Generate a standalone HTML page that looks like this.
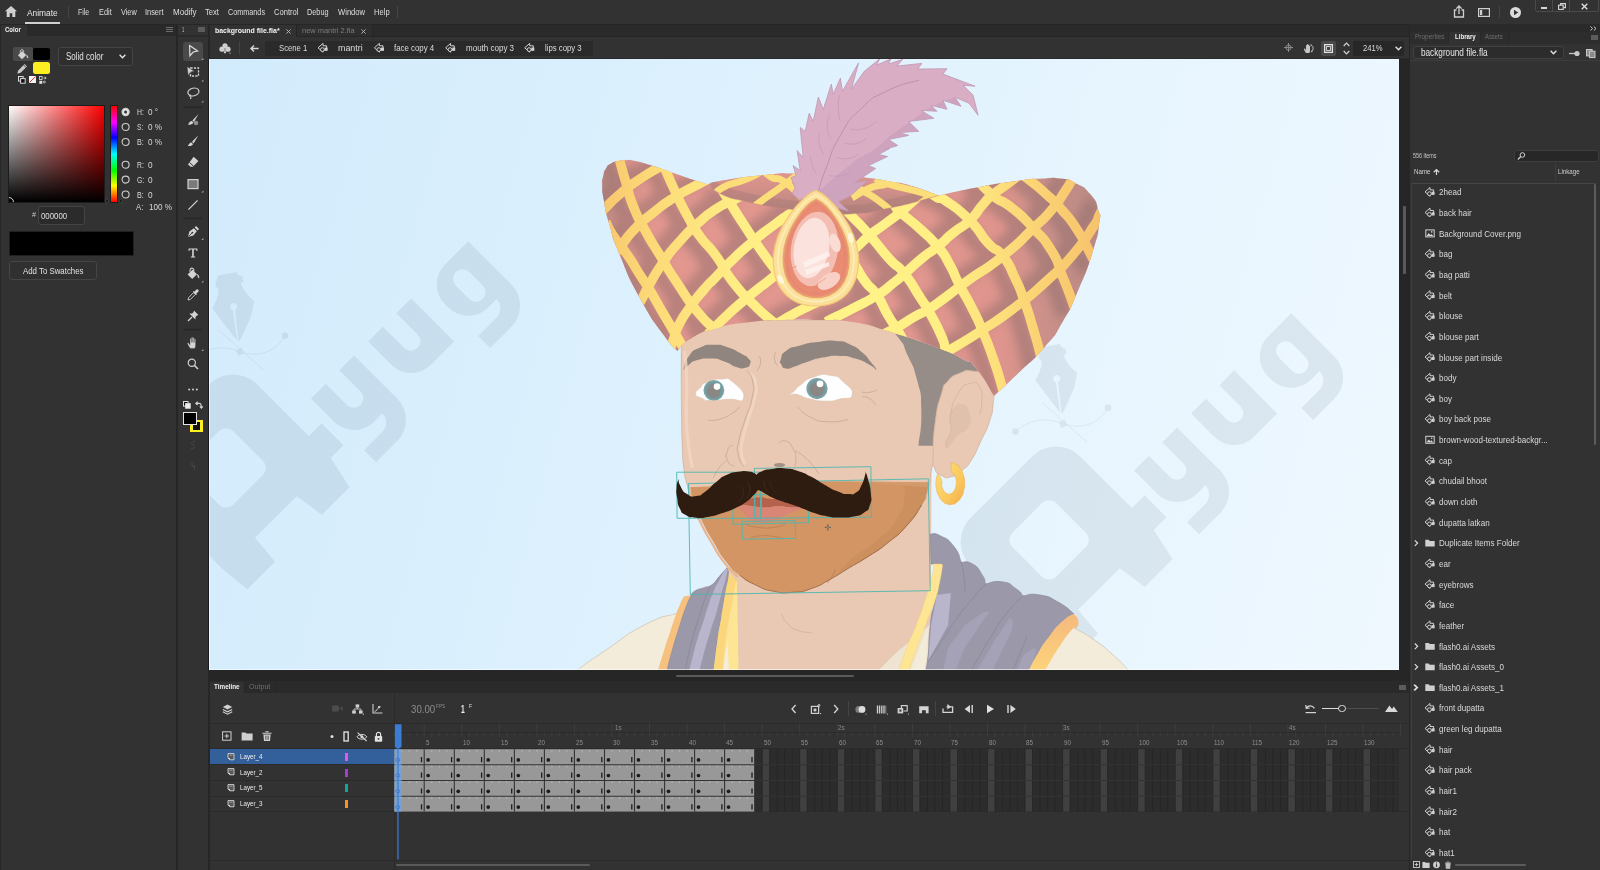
<!DOCTYPE html>
<html><head><meta charset="utf-8">
<style>
*{box-sizing:border-box;margin:0;padding:0}
html,body{width:1600px;height:870px;overflow:hidden;background:#262626;font-family:"Liberation Sans",sans-serif;color:#d6d6d6;font-size:9px}
.a{position:absolute}
.t{position:absolute;white-space:pre;line-height:12px;height:12px;transform-origin:0 50%}
.p{background:#323232}
svg{position:absolute;overflow:visible}
</style></head><body>
<!-- MENU BAR -->
<div class="a p" style="left:0;top:0;width:1600px;height:24px"></div>
<!-- LEFT COLOR PANEL -->
<div class="a p" style="left:0;top:24px;width:176px;height:846px"></div>
<!-- TOOLS -->
<div class="a p" style="left:178px;top:24px;width:30px;height:846px"></div>
<!-- DOC AREA -->
<div class="a p" style="left:209px;top:24px;width:1200px;height:657px"></div>
<!-- TIMELINE -->
<div class="a p" style="left:209px;top:681px;width:1200px;height:189px"></div>
<!-- RIGHT PANEL -->
<div class="a p" style="left:1410px;top:24px;width:190px;height:846px"></div>

<!-- menu -->
<svg style="left:5px;top:6px" width="12" height="11" viewBox="0 0 12 11"><path d="M6 0 L12 5.2 H10.3 V11 H7.3 V7.2 H4.7 V11 H1.7 V5.2 H0 Z" fill="#d0d0d0"/></svg>
<span class="t" style="left:26.8px;top:6.6px;font-size:9.5px;font-weight:400;color:#e6e6e6;transform:scaleX(0.881)">Animate</span>
<div class="a" style="left:25px;top:22px;width:35px;height:1.5px;background:#cfcfcf"></div>
<div class="a" style="left:68px;top:6px;width:1px;height:12px;background:#444"></div>
<span class="t" style="left:78.4px;top:5.9px;font-size:9.5px;font-weight:400;color:#dedede;transform:scaleX(0.725)">File</span>
<span class="t" style="left:98.8px;top:5.9px;font-size:9.5px;font-weight:400;color:#dedede;transform:scaleX(0.776)">Edit</span>
<span class="t" style="left:120.6px;top:5.9px;font-size:9.5px;font-weight:400;color:#dedede;transform:scaleX(0.769)">View</span>
<span class="t" style="left:144.9px;top:5.9px;font-size:9.5px;font-weight:400;color:#dedede;transform:scaleX(0.778)">Insert</span>
<span class="t" style="left:172.7px;top:5.9px;font-size:9.5px;font-weight:400;color:#dedede;transform:scaleX(0.843)">Modify</span>
<span class="t" style="left:205.0px;top:5.9px;font-size:9.5px;font-weight:400;color:#dedede;transform:scaleX(0.803)">Text</span>
<span class="t" style="left:228.0px;top:5.9px;font-size:9.5px;font-weight:400;color:#dedede;transform:scaleX(0.762)">Commands</span>
<span class="t" style="left:273.8px;top:5.9px;font-size:9.5px;font-weight:400;color:#dedede;transform:scaleX(0.800)">Control</span>
<span class="t" style="left:307.2px;top:5.9px;font-size:9.5px;font-weight:400;color:#dedede;transform:scaleX(0.771)">Debug</span>
<span class="t" style="left:337.8px;top:5.9px;font-size:9.5px;font-weight:400;color:#dedede;transform:scaleX(0.802)">Window</span>
<span class="t" style="left:374.0px;top:5.9px;font-size:9.5px;font-weight:400;color:#dedede;transform:scaleX(0.798)">Help</span>
<div class="a" style="left:397px;top:6px;width:1px;height:12px;background:#444"></div>
<!-- right icons -->
<svg style="left:1453px;top:5px" width="12" height="13" viewBox="0 0 12 13"><path d="M3.5 5 H1.5 V12 H10.5 V5 H8.5" fill="none" stroke="#d0d0d0" stroke-width="1.3"/><path d="M6 9 V1.2 M3.3 3.6 L6 1 L8.7 3.6" fill="none" stroke="#d0d0d0" stroke-width="1.3"/></svg>
<svg style="left:1478px;top:8px" width="12" height="9" viewBox="0 0 12 9"><rect x=".6" y=".6" width="10.8" height="7.8" fill="none" stroke="#d0d0d0" stroke-width="1.2"/><rect x="2" y="2" width="2.2" height="5" fill="#d0d0d0"/></svg>
<div class="a" style="left:1499px;top:6px;width:1px;height:12px;background:#444"></div>
<svg style="left:1509.5px;top:6.5px" width="11" height="11" viewBox="0 0 11 11"><circle cx="5.5" cy="5.5" r="5.5" fill="#dcdcdc"/><path d="M4 2.8 L8.2 5.5 L4 8.2 Z" fill="#323232"/></svg>
<div class="a" style="left:1535px;top:-1px;width:64px;height:12.5px;border:1px solid #4a4a4a;border-radius:0 0 2px 2px"></div>
<div class="a" style="left:1552px;top:0;width:1px;height:11px;background:#4a4a4a"></div>
<div class="a" style="left:1569px;top:0;width:1px;height:11px;background:#4a4a4a"></div>
<div class="a" style="left:1540.5px;top:7px;width:6.5px;height:1.6px;background:#d8d8d8"></div>
<svg style="left:1557.5px;top:2.5px" width="8" height="7" viewBox="0 0 8 7"><rect x=".6" y="2.2" width="4.6" height="4.2" fill="none" stroke="#d8d8d8" stroke-width="1.1"/><path d="M2.6 2 V.6 H7.4 V4.6 H5.4" fill="none" stroke="#d8d8d8" stroke-width="1.1"/></svg>
<svg style="left:1581px;top:2.5px" width="7" height="7" viewBox="0 0 7 7"><path d="M.7 .7 L6.3 6.3 M6.3 .7 L.7 6.3" stroke="#e0e0e0" stroke-width="1.3"/></svg>

<!-- color panel -->
<div class="a" style="left:0;top:24px;width:176px;height:12px;background:#2a2a2a"></div>
<div class="a" style="left:0;top:24px;width:1600px;height:1px;background:#262626"></div>
<div class="a p" style="left:1px;top:25px;width:26px;height:11px"></div>
<div class="a" style="left:0;top:24px;width:1px;height:846px;background:#282828"></div>
<span class="t" style="left:4.8px;top:24.2px;font-size:8px;font-weight:700;color:#f2f2f2;transform:scaleX(0.756)">Color</span>
<svg style="left:166px;top:27px" width="7" height="5" viewBox="0 0 7 5"><path d="M0 .5H7M0 2.5H7M0 4.5H7" stroke="#6e6e6e" stroke-width="1"/></svg>
<!-- fill/stroke -->
<div class="a" style="left:12.5px;top:47px;width:20px;height:13.5px;background:#4a4a4a;border-radius:2px"></div>
<svg style="left:16.5px;top:48.5px" width="12" height="11" viewBox="0 0 12 11"><path d="M1 6.2 L5.2 2 L9.2 6 L5 10.2 Z" fill="#d4d4d4"/><path d="M3.2 3.8 C3 1.5 4.2 .4 5.4 .7 C6.4 1 6.8 2.2 6.6 3.4" fill="none" stroke="#d4d4d4" stroke-width="1"/><path d="M9.4 5.6 C10.8 6.6 11.4 8 11.2 9.6 C10 9 9.4 8 9.4 5.6Z" fill="#d4d4d4"/></svg>
<div class="a" style="left:33px;top:47.5px;width:17px;height:12px;background:#000;border-radius:2px"></div>
<svg style="left:17px;top:62.5px" width="11" height="11" viewBox="0 0 11 11"><path d="M.3 10.7 L1.2 7.4 L7.6 1 L10 3.4 L3.6 9.8 Z" fill="#c8c8c8"/><path d="M6.6 2 L9 4.4" stroke="#323232" stroke-width=".8"/></svg>
<div class="a" style="left:33px;top:61.5px;width:17px;height:12.5px;background:#fcee21;border-radius:2.5px"></div>
<svg style="left:18.3px;top:75.8px" width="8" height="8" viewBox="0 0 8 8"><rect x=".5" y=".5" width="4.6" height="4.6" fill="#323232" stroke="#dcdcdc" stroke-width="1"/><rect x="2.6" y="2.6" width="4.6" height="4.6" fill="#111" stroke="#dcdcdc" stroke-width="1"/></svg>
<svg style="left:29.3px;top:76.2px" width="7" height="7" viewBox="0 0 7 7"><rect width="7" height="7" fill="#f4f4f4"/><path d="M.6 6.4 L6.4 .6" stroke="#e83030" stroke-width="1"/></svg>
<svg style="left:39px;top:76px" width="8" height="8" viewBox="0 0 8 8"><rect x=".5" y=".5" width="2.6" height="3" fill="none" stroke="#d0d0d0" stroke-width=".9"/><rect x=".3" y="4.8" width="3" height="3" fill="#e0e0e0"/><path d="M4.4 2 H7 M5.8 .8 L7.2 2 L5.8 3.2 M7 6 H4.4 M5.6 4.8 L4.2 6 L5.6 7.2" fill="none" stroke="#d0d0d0" stroke-width=".9"/></svg>
<!-- dropdown -->
<div class="a" style="left:57.5px;top:46.5px;width:75px;height:19.5px;background:#2e2e2e;border:1px solid #444;border-radius:3px"></div>
<span class="t" style="left:65.6px;top:50.6px;font-size:10px;font-weight:400;color:#e2e2e2;transform:scaleX(0.801)">Solid color</span>
<svg style="left:118.5px;top:54px" width="7" height="5" viewBox="0 0 7 5"><path d="M.6 .8 L3.5 3.8 L6.4 .8" fill="none" stroke="#e4e4e4" stroke-width="1.3"/></svg>
<!-- picker -->
<div class="a" style="left:8px;top:104.5px;width:97px;height:98px;background:#1c1c1c"></div>
<div class="a" style="left:9px;top:105.5px;width:95px;height:96px;background:linear-gradient(to bottom,rgba(0,0,0,0),#000),linear-gradient(to right,#fff,#f00)"></div>
<svg style="left:9px;top:196.5px" width="5" height="5" viewBox="0 0 5 5"><path d="M0 .6 C2.6 .6 4.4 2.4 4.4 5" fill="none" stroke="#d8d8d8" stroke-width="1"/></svg>
<div class="a" style="left:109.5px;top:104.5px;width:8px;height:98px;background:#1c1c1c"></div>
<div class="a" style="left:110.5px;top:105.5px;width:6px;height:96px;background:linear-gradient(to bottom,#f00 0%,#f0f 17%,#00f 33%,#0ff 50%,#0f0 67%,#ff0 83%,#f00 100%)"></div>
<svg style="left:106px;top:197.5px" width="16" height="6" viewBox="0 0 16 6"><path d="M0 0 L3 3 L0 6 Z M16 0 L13 3 L16 6 Z" fill="#1a1a1a" stroke="#555" stroke-width=".5"/></svg>
<!-- radios -->
<svg style="left:121px;top:107px" width="10" height="95" viewBox="0 0 10 95">
<g fill="none" stroke="#cfcfcf" stroke-width="1.1"><circle cx="4.6" cy="5" r="3.6" fill="#e6e6e6"/><circle cx="4.6" cy="20" r="3.5"/><circle cx="4.6" cy="35" r="3.5"/><circle cx="4.6" cy="57.7" r="3.5"/><circle cx="4.6" cy="72.6" r="3.5"/><circle cx="4.6" cy="87.5" r="3.5"/></g><circle cx="4.6" cy="5" r="1.5" fill="#323232"/></svg>
<span class="t" style="left:136.7px;top:106.2px;font-size:9px;font-weight:400;color:#d8d8d8;transform:scaleX(0.756)">H:</span><span class="t" style="left:148.0px;top:106.2px;font-size:9px;font-weight:400;color:#d8d8d8;transform:scaleX(0.900)">0 °</span>
<span class="t" style="left:136.7px;top:121.3px;font-size:9px;font-weight:400;color:#d8d8d8;transform:scaleX(0.740)">S:</span><span class="t" style="left:148.0px;top:121.3px;font-size:9px;font-weight:400;color:#d8d8d8;transform:scaleX(0.902)">0 %</span>
<span class="t" style="left:136.7px;top:136.3px;font-size:9px;font-weight:400;color:#d8d8d8;transform:scaleX(0.799)">B:</span><span class="t" style="left:148.0px;top:136.3px;font-size:9px;font-weight:400;color:#d8d8d8;transform:scaleX(0.902)">0 %</span>
<span class="t" style="left:136.7px;top:158.8px;font-size:9px;font-weight:400;color:#d8d8d8;transform:scaleX(0.756)">R:</span><span class="t" style="left:148.0px;top:158.8px;font-size:9px;font-weight:400;color:#d8d8d8;transform:scaleX(0.917)">0</span>
<span class="t" style="left:136.7px;top:173.8px;font-size:9px;font-weight:400;color:#d8d8d8;transform:scaleX(0.767)">G:</span><span class="t" style="left:148.0px;top:173.8px;font-size:9px;font-weight:400;color:#d8d8d8;transform:scaleX(0.917)">0</span>
<span class="t" style="left:136.7px;top:188.7px;font-size:9px;font-weight:400;color:#d8d8d8;transform:scaleX(0.799)">B:</span><span class="t" style="left:148.0px;top:188.7px;font-size:9px;font-weight:400;color:#d8d8d8;transform:scaleX(0.917)">0</span>
<span class="t" style="left:136.2px;top:200.8px;font-size:9px;font-weight:400;color:#d8d8d8;transform:scaleX(0.857)">A:</span><span class="t" style="left:148.5px;top:200.8px;font-size:9px;font-weight:400;color:#d8d8d8;transform:scaleX(0.901)">100 %</span>
<!-- hex -->
<span class="t" style="left:31.5px;top:209.3px;font-size:7.5px;font-weight:400;color:#c8c8c8;transform:scaleX(0.959)">#</span>
<div class="a" style="left:37.5px;top:205.5px;width:47px;height:19.5px;background:#2b2b2b;border:1px solid #444;border-radius:3px"></div>
<span class="t" style="left:40.6px;top:209.5px;font-size:9px;font-weight:400;color:#e0e0e0;transform:scaleX(0.872)">000000</span>
<div class="a" style="left:8.5px;top:230.5px;width:125px;height:25.5px;background:#000;border:1px solid #202020"></div>
<div class="a" style="left:9px;top:260.5px;width:88px;height:19.5px;border:1px solid #454545;border-radius:3px;background:#303030"></div>
<span class="t" style="left:22.5px;top:264.5px;font-size:9px;font-weight:400;color:#e0e0e0;transform:scaleX(0.872)">Add To Swatches</span>

<!-- tools -->
<div class="a" style="left:176px;top:24px;width:2px;height:846px;background:#262626"></div>
<div class="a" style="left:178px;top:35px;width:30px;height:1.5px;background:#2a2a2a"></div>
<span class="t" style="left:182.0px;top:24.0px;font-size:8px;font-weight:400;color:#9fc4ee;transform:scaleX(0.516)">1</span>
<svg style="left:198px;top:27px" width="7" height="5" viewBox="0 0 7 5"><rect width="7" height="5" fill="#5c5c5c"/></svg>
<div class="a" style="left:182.5px;top:41.5px;width:20.5px;height:19.5px;background:#4a4a4a;border-radius:3px"></div>
<svg style="left:184.5px;top:43px" width="16" height="16" viewBox="0 0 16 16"><path d="M4.6 2.6 L12.6 8 L8.2 9 L4.9 12.8 Z" fill="none" stroke="#e0e0e0" stroke-width="1.2" stroke-linejoin="miter"/></svg>
<g></g>
<svg style="left:184.5px;top:64px" width="16" height="16" viewBox="0 0 16 16"><rect x="5.5" y="4" width="8" height="8" fill="none" stroke="#d0d0d0" stroke-width="1.3" stroke-dasharray="2.2 1.2"/><path d="M2 2.6 L9.4 7.2 L5.6 8 L3.2 11.4 Z" fill="#d0d0d0" stroke="#323232" stroke-width=".5"/></svg>
<svg style="left:184.5px;top:85px" width="16" height="16" viewBox="0 0 16 16"><ellipse cx="8.4" cy="7" rx="5.6" ry="3.8" fill="none" stroke="#cfcfcf" stroke-width="1.2" transform="rotate(-12 8.4 7)"/><path d="M5.8 10.2 C4.6 9.6 4.2 11 5.2 11.4 C6.4 11.8 6.2 13.4 5 13.8" fill="none" stroke="#cfcfcf" stroke-width="1.1"/></svg>
<svg style="left:178px;top:40px" width="30" height="440" viewBox="0 0 30 440"><g fill="#b0b0b0"><path d="M25.4 18.0 V20 H23.4Z"/><path d="M25.4 39.5 V41.5 H23.4Z"/><path d="M25.4 60.5 V62.5 H23.4Z"/><path d="M25.4 150.5 V152.5 H23.4Z"/><path d="M25.4 198.0 V200 H23.4Z"/><path d="M25.4 240.5 V242.5 H23.4Z"/><path d="M25.4 309.0 V311 H23.4Z"/></g>
<g stroke="#262626" stroke-width="1.3"><path d="M5.5 67.2H24"/><path d="M5.5 178.4H24"/><path d="M5.5 289.5H24"/></g></svg>
<!-- fluid brush -->
<svg style="left:184.5px;top:112px" width="16" height="16" viewBox="0 0 16 16"><path d="M13.6 2 L7.4 8.4 L9 10 Z" fill="#d4d4d4"/><path d="M6.8 9 C5 9 4.6 10.6 3 12.4 C5.4 13 7.6 12.4 8.4 10.6 Z" fill="#d4d4d4"/><circle cx="11" cy="11" r="2.3" fill="#8e8e8e"/></svg>
<!-- brush -->
<svg style="left:184.5px;top:133px" width="16" height="16" viewBox="0 0 16 16"><path d="M13.4 2.2 L7 8.8 L8.6 10.4 Z" fill="#d4d4d4"/><path d="M6.4 9.4 C4.6 9.4 4.4 11 2.8 12.8 C5.2 13.4 7.2 12.8 8 11 Z" fill="#d4d4d4"/></svg>
<!-- eraser -->
<svg style="left:184.5px;top:154px" width="16" height="16" viewBox="0 0 16 16"><path d="M8.6 2.8 L13.4 7 L8 12.8 H5.6 L3 10.4 Z" fill="#d4d4d4"/><path d="M4.6 8.6 L8.8 12.4" stroke="#323232" stroke-width="1"/></svg>
<!-- rect -->
<svg style="left:184.5px;top:176px" width="16" height="16" viewBox="0 0 16 16"><rect x="3" y="3.6" width="10" height="9" fill="#7a7a7a" stroke="#d0d0d0" stroke-width="1.2"/></svg>
<!-- line -->
<svg style="left:184.5px;top:197px" width="16" height="16" viewBox="0 0 16 16"><path d="M3.4 12.6 L12.6 3.4" stroke="#d4d4d4" stroke-width="1.2"/></svg>
<!-- pen -->
<svg style="left:184.5px;top:223.5px" width="16" height="16" viewBox="0 0 16 16"><path d="M3 13 L4.4 7.6 L8.8 4.2 L11.8 7.2 L8.4 11.6 Z" fill="#d4d4d4"/><path d="M9.6 3.4 L11 2 L14 5 L12.6 6.4 Z" fill="#d4d4d4"/><path d="M3.4 12.6 L7 9" stroke="#323232" stroke-width=".9"/><circle cx="7.4" cy="8.6" r=".9" fill="#323232"/></svg>
<!-- T -->
<svg style="left:184.5px;top:245px" width="16" height="16" viewBox="0 0 16 16"><path d="M3.6 3.4 H12.4 V6 H11.4 V4.6 H8.8 V11.6 H10.2 V12.6 H5.8 V11.6 H7.2 V4.6 H4.6 V6 H3.6 Z" fill="#d8d8d8"/></svg>
<!-- bucket -->
<svg style="left:184.5px;top:266px" width="16" height="16" viewBox="0 0 16 16"><path d="M2.6 8.4 L7.4 3.8 L12 8.2 L7.2 13 Z" fill="#d4d4d4"/><path d="M5 5.8 C4.6 3 6 1.8 7.4 2.2 C8.6 2.6 9 4 8.8 5.4" fill="none" stroke="#d4d4d4" stroke-width="1.1"/><path d="M12.2 7.8 C13.8 9 14.4 10.6 14.2 12.4 C12.8 11.8 12.2 10.6 12.2 7.8Z" fill="#d4d4d4"/></svg>
<!-- eyedropper -->
<svg style="left:184.5px;top:287px" width="16" height="16" viewBox="0 0 16 16"><path d="M3 13 L3.6 10.6 L8.6 5.6 L10.4 7.4 L5.4 12.4 Z" fill="none" stroke="#c8c8c8" stroke-width="1"/><path d="M8.4 4.4 L11.6 7.6 M9.6 5.6 L11.6 3.2 C12.4 2.4 13.6 3.6 12.8 4.4 L10.6 6.6" fill="#d4d4d4" stroke="#d4d4d4" stroke-width="1.3"/></svg>
<!-- pin -->
<svg style="left:184.5px;top:308px" width="16" height="16" viewBox="0 0 16 16"><path d="M9 2.6 L13.4 7 L12 7.4 L10.6 8.8 L10.4 11.6 L4.4 5.6 L7.2 5.4 L8.6 4 Z" fill="#d4d4d4"/><path d="M7 9 L3 13" stroke="#d4d4d4" stroke-width="1.2"/></svg>
<!-- hand -->
<svg style="left:184.5px;top:334.5px" width="16" height="16" viewBox="0 0 16 16"><path d="M5.2 13.4 C4 11.6 2.8 9.8 2.4 8.6 C2.2 7.8 3.2 7.4 3.8 8.2 L5 9.8 V4 C5 3 6.4 3 6.4 4 V7.4 V2.8 C6.4 1.8 7.8 1.8 7.8 2.8 V7.4 V3.2 C7.8 2.2 9.2 2.2 9.2 3.2 V7.6 V4.6 C9.2 3.6 10.6 3.6 10.6 4.6 V10 C10.6 11.6 10.2 12.4 9.8 13.4 Z" fill="#d4d4d4" stroke="#323232" stroke-width=".35"/></svg>
<!-- zoom -->
<svg style="left:184.5px;top:356px" width="16" height="16" viewBox="0 0 16 16"><circle cx="6.8" cy="6.8" r="3.6" fill="none" stroke="#d0d0d0" stroke-width="1.2"/><path d="M9.4 9.4 L13 13" stroke="#d0d0d0" stroke-width="1.5"/></svg>
<!-- dots -->
<svg style="left:187.5px;top:387.5px" width="10" height="3" viewBox="0 0 10 3"><circle cx="1.2" cy="1.5" r="1" fill="#d0d0d0"/><circle cx="5" cy="1.5" r="1" fill="#d0d0d0"/><circle cx="8.8" cy="1.5" r="1" fill="#d0d0d0"/></svg>
<svg style="left:182.5px;top:400.5px" width="8" height="8" viewBox="0 0 8 8"><rect x=".5" y=".5" width="4.6" height="4.6" fill="#111" stroke="#dcdcdc" stroke-width="1"/><rect x="2.6" y="2.6" width="4.6" height="4.6" fill="#eee" stroke="#dcdcdc" stroke-width="1"/></svg>
<svg style="left:194.5px;top:400.5px" width="8" height="8" viewBox="0 0 8 8"><path d="M1 2.4 H4.2 C6 2.4 6.4 4 6.4 7 M2.6 .6 L.8 2.4 L2.6 4.2 M4.8 5.4 L6.4 7.2 L7.8 5.4" fill="none" stroke="#d4d4d4" stroke-width="1.1"/></svg>
<div class="a" style="left:190px;top:419.5px;width:12.5px;height:12.5px;background:#fcee21"></div>
<div class="a" style="left:192.5px;top:422px;width:7.5px;height:7.5px;background:#111"></div>
<div class="a" style="left:183px;top:411.5px;width:13.5px;height:13.5px;background:#000;border:1px solid #e4e4e4"></div>
<svg style="left:188.5px;top:440px" width="8" height="10" viewBox="0 0 8 10"><path d="M6 1 C2 1.4 1.8 3.6 4 4.8 C6.4 6 5.6 8.4 2 9" fill="none" stroke="#484848" stroke-width="1"/></svg>
<svg style="left:188.5px;top:460.5px" width="8" height="10" viewBox="0 0 8 10"><path d="M3 1 V5 H5.6 V9" fill="none" stroke="#484848" stroke-width="1"/></svg>

<!-- doc tabs -->
<div class="a" style="left:208px;top:24px;width:1.5px;height:846px;background:#262626"></div>
<div class="a" style="left:209px;top:25px;width:1201px;height:12px;background:#2a2a2a"></div>
<div class="a p" style="left:209.5px;top:25px;width:86.5px;height:12px"></div>
<div class="a" style="left:296px;top:25px;width:1px;height:11px;background:#262626"></div>
<div class="a" style="left:297px;top:25px;width:75px;height:11px;background:#2e2e2e"></div>
<div class="a" style="left:372px;top:25px;width:1px;height:11px;background:#262626"></div>
<div class="a" style="left:297px;top:36px;width:1113px;height:1px;background:#262626"></div>
<span class="t" style="left:215.0px;top:24.6px;font-size:8px;font-weight:700;color:#f4f4f4;transform:scaleX(0.870)">background file.fla*</span>
<span class="t" style="left:302.4px;top:24.6px;font-size:8px;font-weight:400;color:#7c7c7c;transform:scaleX(0.931)">new mantri 2.fla</span>
<svg style="left:285.5px;top:29px" width="5" height="5" viewBox="0 0 5 5"><path d="M.4 .4L4.6 4.6M4.6 .4L.4 4.6" stroke="#bdbdbd" stroke-width=".9"/></svg>
<svg style="left:361px;top:29px" width="5" height="5" viewBox="0 0 5 5"><path d="M.4 .4L4.6 4.6M4.6 .4L.4 4.6" stroke="#bdbdbd" stroke-width=".9"/></svg>
<!-- edit bar -->
<svg style="left:219px;top:42.5px" width="12" height="11" viewBox="0 0 12 11"><circle cx="6" cy="2.8" r="2.6" fill="#cfcfcf"/><circle cx="3" cy="6.2" r="2.6" fill="#cfcfcf"/><circle cx="9" cy="6.2" r="2.6" fill="#cfcfcf"/><path d="M6 5 L7.2 10.2 H4.8 Z" fill="#cfcfcf"/><circle cx="11" cy="10.2" r=".6" fill="#cfcfcf"/></svg>
<div class="a" style="left:239px;top:41px;width:1px;height:14px;background:#444"></div>
<svg style="left:250px;top:44.5px" width="9" height="7" viewBox="0 0 9 7"><path d="M8.6 3.5 H1.6 M4 .6 L1 3.5 L4 6.4" fill="none" stroke="#d8d8d8" stroke-width="1.4"/></svg>
<div class="a" style="left:264.5px;top:40.5px;width:328.5px;height:15px;background:#2a2a2a;border-radius:2px"></div>
<span class="t" style="left:278.7px;top:42.0px;font-size:9.5px;font-weight:400;color:#dcdcdc;transform:scaleX(0.811)">Scene 1</span>
<span class="t" style="left:338.4px;top:42.0px;font-size:9.5px;font-weight:400;color:#dcdcdc;transform:scaleX(0.932)">mantri</span>
<span class="t" style="left:394.2px;top:42.0px;font-size:9.5px;font-weight:400;color:#dcdcdc;transform:scaleX(0.827)">face copy 4</span>
<span class="t" style="left:465.5px;top:42.0px;font-size:9.5px;font-weight:400;color:#dcdcdc;transform:scaleX(0.843)">mouth copy 3</span>
<span class="t" style="left:544.6px;top:42.0px;font-size:9.5px;font-weight:400;color:#dcdcdc;transform:scaleX(0.815)">lips copy 3</span>
<svg style="left:0;top:0" width="1600" height="870" viewBox="0 0 1600 870"><defs><g id="sym"><path d="M0 4.6 L5 .2 V2.6 H8.6 V6.6 H5 V9 Z" fill="none" stroke="#d2d2d2" stroke-width="1"/><circle cx="4.4" cy="6.4" r="1.9" fill="#323232" stroke="#d2d2d2" stroke-width="1"/><rect x="6.6" y="4.4" width="3" height="3.2" fill="#d2d2d2"/></g></defs>
<use href="#sym" x="318" y="43.2"/><use href="#sym" x="374.4" y="43.2"/><use href="#sym" x="445.6" y="43.2"/><use href="#sym" x="524.7" y="43.2"/></svg>
<!-- right side of edit bar -->
<svg style="left:1283.5px;top:43px" width="9" height="9" viewBox="0 0 9 9"><circle cx="4.5" cy="4.5" r="2.6" fill="none" stroke="#8a8a8a" stroke-width="1"/><path d="M4.5 0V9M0 4.5H9" stroke="#8a8a8a" stroke-width="1"/></svg>
<svg style="left:1302px;top:42px" width="13" height="12" viewBox="0 0 13 12"><path d="M4 11 C3 9.4 2.2 8.2 2 7.2 C1.8 6.6 2.6 6.2 3.2 7 L4 8.2 V3.6 C4 2.8 5 2.8 5 3.6 V6.4 V2.6 C5 1.8 6 1.8 6 2.6 V6.4 V3 C6 2.2 7 2.2 7 3 V6.6 V4.2 C7 3.4 8 3.4 8 4.2 V8.4 C8 9.6 7.8 10.2 7.4 11 Z" fill="#c6c6c6"/><path d="M9.4 3.2 C11.6 4.6 11.8 7.8 9.6 9.6 M8.8 2.4 L9.6 3.4 L8.4 4 M10.4 9.8 L9.4 9.8 L9.6 8.6" fill="none" stroke="#c6c6c6" stroke-width="1"/></svg>
<div class="a" style="left:1321px;top:41px;width:15px;height:14.5px;background:#4a4a4a;border-radius:2px"></div>
<svg style="left:1324px;top:43.5px" width="9" height="9" viewBox="0 0 9 9"><rect x=".6" y=".6" width="7.8" height="7.8" fill="#5c5c5c" stroke="#e2e2e2" stroke-width="1.2"/><rect x="2.6" y="2.6" width="3.8" height="3.8" fill="#3a3a3a" stroke="#e2e2e2" stroke-width=".9"/></svg>
<svg style="left:1343px;top:42px" width="7" height="13" viewBox="0 0 7 13"><path d="M.7 4 L3.5 1.2 L6.3 4 M.7 9 L3.5 11.8 L6.3 9" fill="none" stroke="#d4d4d4" stroke-width="1.2"/></svg>
<div class="a" style="left:1352.5px;top:41px;width:40px;height:14.5px;background:#272727;border-radius:2px 0 0 2px"></div>
<div class="a" style="left:1393px;top:41px;width:10.5px;height:14.5px;background:#272727;border-radius:0 2px 2px 0"></div>
<span class="t" style="left:1362.5px;top:42.2px;font-size:9.5px;font-weight:400;color:#dcdcdc;transform:scaleX(0.802)">241%</span>
<svg style="left:1394.8px;top:46.2px" width="7" height="5" viewBox="0 0 7 5"><path d="M.6 .8 L3.5 3.8 L6.4 .8" fill="none" stroke="#e4e4e4" stroke-width="1.3"/></svg>
<!-- stage borders + scrollbars -->
<div class="a" style="left:209px;top:58px;width:1201px;height:1px;background:#2a2a2a"></div>
<div class="a" style="left:1399px;top:59px;width:10px;height:622px;background:#262626"></div>
<div class="a" style="left:209px;top:670px;width:1200px;height:11px;background:#262626"></div>
<div class="a" style="left:1403px;top:206px;width:2.5px;height:68px;background:#5a5a5a;border-radius:1px"></div>
<div class="a" style="left:676px;top:674.5px;width:178px;height:2.5px;background:#5a5a5a;border-radius:1px"></div>
<div class="a" style="left:1409px;top:24px;width:1.2px;height:846px;background:#262626"></div>

<!-- stage-edge --><div class="a" style="left:208px;top:59px;width:1px;height:611px;background:#1a1a1a"></div>

<!-- STAGE -->
<div id="stage" class="a" style="left:209px;top:59px;width:1190px;height:611px;overflow:hidden;background:linear-gradient(105deg,#d2ebfc 0%,#dcf0fd 36%,#e7f5fe 70%,#eff8ff 100%)">
<svg style="left:0;top:0" width="1190" height="611" viewBox="209 59 1190 611">
<defs>
<linearGradient id="hatg" gradientUnits="userSpaceOnUse" x1="600" y1="0" x2="1100" y2="0">
<stop offset="0" stop-color="#bd8a85"/><stop offset=".05" stop-color="#d6928a"/><stop offset=".1" stop-color="#e2978f"/><stop offset=".5" stop-color="#e3988f"/><stop offset=".8" stop-color="#df958d"/><stop offset=".9" stop-color="#c99089"/><stop offset="1" stop-color="#b98984"/></linearGradient>
<filter id="blur6" x="-20%" y="-20%" width="140%" height="140%"><feGaussianBlur stdDeviation="5"/></filter>
<linearGradient id="latg" gradientUnits="userSpaceOnUse" x1="600" y1="0" x2="1100" y2="0"><stop offset="0" stop-color="#f8c66e"/><stop offset=".1" stop-color="#fcd977"/><stop offset=".28" stop-color="#ffee85"/><stop offset=".5" stop-color="#fff388"/><stop offset=".7" stop-color="#ffee84"/><stop offset=".86" stop-color="#fbd576"/><stop offset="1" stop-color="#f7c26c"/></linearGradient>
<linearGradient id="trimg" x1="0" y1="0" x2="0" y2="1"><stop offset="0" stop-color="#f5b97e"/><stop offset="1" stop-color="#fdd57a"/></linearGradient>
<linearGradient id="ringg" x1="0" y1="0" x2="1" y2="1"><stop offset="0" stop-color="#fde27a"/><stop offset=".6" stop-color="#fbc95c"/><stop offset="1" stop-color="#f3aa48"/></linearGradient>
</defs>
<g transform="translate(0 0)" fill="#0b2236" opacity=".072"><g transform="translate(354.1 441.7) rotate(-45)"><path fill-rule="evenodd" d="M-146 -143 H-62 A34 34 0 0 1 -28 -109 V-36 H-10 V-5 H-28 L-35.4 29 H-74.6 L-79 -2 H-138 L-140.8 29 H-180 L-183 -2 V-109 A34 34 0 0 1 -146 -143 Z M-130 -103 H-88 A10 10 0 0 1 -78 -93 V-51 A10 10 0 0 1 -88 -41 H-130 A10 10 0 0 1 -140 -51 V-93 A10 10 0 0 1 -130 -103Z"/><path d="M0 -61 H21 V-31 A9.5 9.5 0 0 0 40 -31 V-61 H61 V0 H28 A28 28 0 0 1 0 -28 Z"/><path d="M61 -2 V0 A30 30 0 0 1 31 30 H1 V13 H27 A13 13 0 0 0 40 0 V-2 Z"/><path d="M80.7 -61 H101.7 V-31 A9.5 9.5 0 0 0 120.7 -31 V-61 H141.7 V0 H108.7 A28 28 0 0 1 80.7 -28 Z"/><path fill-rule="evenodd" d="M189.4 -61 H222.4 V0 H189.4 A28 28 0 0 1 161.4 -28 V-33 A28 28 0 0 1 189.4 -61 Z M182.4 -38.5 A9.5 9.5 0 0 1 201.4 -38.5 V-19.5 A9.5 9.5 0 0 1 182.4 -19.5 Z"/><path d="M222.4 -2 V0 A30 30 0 0 1 192.4 30 H162.4 V13 H188.4 A13 13 0 0 0 201.4 0 V-2 Z"/></g><g transform="translate(234.8 306.6)"><path fill-rule="evenodd" d="M-16.8 -31 L1.9 -34.6 L4 -31 L7.5 -30 L8.6 -24.8 L6 -23.8 C7 -20 10 -13 19.4 -5.7 L16.3 9.3 L10.1 23.8 L5 34.2 L3.6 34.2 L0.2 3.4 A3.6 3.6 0 1 0 -2 3.5 L2.4 34.2 L-6.4 22.8 L-16.8 9.3 L-22.5 1.6 C-18 -6 -16 -12 -16.2 -17.6 L-19.4 -20.7 L-18.8 -24.8 Z"/><path d="M-15.8 23.8 L29.1 63.5" stroke="#0b2236" stroke-width=".9" fill="none"/><path d="M-42.3 52.9 C-25 38 -8 40 5.2 45 C25 52 42 44 50.2 29.1" stroke="#0b2236" stroke-width=".9" fill="none"/><circle cx="50.2" cy="29.1" r="3.3"/><circle cx="-42.3" cy="52.9" r="3.3"/><rect x="2" y="42" width="6.4" height="6.4" transform="rotate(-25 5.2 45.2)"/></g></g>
<g transform="translate(823 72)" fill="#0b2236" opacity=".072"><g transform="translate(354.1 441.7) rotate(-45)"><path fill-rule="evenodd" d="M-146 -143 H-62 A34 34 0 0 1 -28 -109 V-36 H-10 V-5 H-28 L-35.4 29 H-74.6 L-79 -2 H-138 L-140.8 29 H-180 L-183 -2 V-109 A34 34 0 0 1 -146 -143 Z M-130 -103 H-88 A10 10 0 0 1 -78 -93 V-51 A10 10 0 0 1 -88 -41 H-130 A10 10 0 0 1 -140 -51 V-93 A10 10 0 0 1 -130 -103Z"/><path d="M0 -61 H21 V-31 A9.5 9.5 0 0 0 40 -31 V-61 H61 V0 H28 A28 28 0 0 1 0 -28 Z"/><path d="M61 -2 V0 A30 30 0 0 1 31 30 H1 V13 H27 A13 13 0 0 0 40 0 V-2 Z"/><path d="M80.7 -61 H101.7 V-31 A9.5 9.5 0 0 0 120.7 -31 V-61 H141.7 V0 H108.7 A28 28 0 0 1 80.7 -28 Z"/><path fill-rule="evenodd" d="M189.4 -61 H222.4 V0 H189.4 A28 28 0 0 1 161.4 -28 V-33 A28 28 0 0 1 189.4 -61 Z M182.4 -38.5 A9.5 9.5 0 0 1 201.4 -38.5 V-19.5 A9.5 9.5 0 0 1 182.4 -19.5 Z"/><path d="M222.4 -2 V0 A30 30 0 0 1 192.4 30 H162.4 V13 H188.4 A13 13 0 0 0 201.4 0 V-2 Z"/></g><g transform="translate(234.8 306.6)"><path fill-rule="evenodd" d="M-16.8 -31 L1.9 -34.6 L4 -31 L7.5 -30 L8.6 -24.8 L6 -23.8 C7 -20 10 -13 19.4 -5.7 L16.3 9.3 L10.1 23.8 L5 34.2 L3.6 34.2 L0.2 3.4 A3.6 3.6 0 1 0 -2 3.5 L2.4 34.2 L-6.4 22.8 L-16.8 9.3 L-22.5 1.6 C-18 -6 -16 -12 -16.2 -17.6 L-19.4 -20.7 L-18.8 -24.8 Z"/><path d="M-15.8 23.8 L29.1 63.5" stroke="#0b2236" stroke-width=".9" fill="none"/><path d="M-42.3 52.9 C-25 38 -8 40 5.2 45 C25 52 42 44 50.2 29.1" stroke="#0b2236" stroke-width=".9" fill="none"/><circle cx="50.2" cy="29.1" r="3.3"/><circle cx="-42.3" cy="52.9" r="3.3"/><rect x="2" y="42" width="6.4" height="6.4" transform="rotate(-25 5.2 45.2)"/></g></g>
<path d="M575.0 674.0C575.9 672.7 567.2 678.2 577.8 670.0C588.4 661.8 584.7 664.4 606.9 649.4C629.1 634.4 621.3 637.0 644.4 625.0C667.5 613.0 665.7 617.3 676.3 613.4L690 600L700 674Z" fill="#f4ecda" stroke="#cfc4b0" stroke-width=".8"/>
<path d="M1070.0 626.0C1071.9 626.9 1067.5 624.1 1075.6 628.8C1083.7 633.5 1081.9 631.3 1094.4 640.0C1106.9 648.7 1101.9 645.0 1113.1 655.0C1124.3 665.0 1122.1 663.7 1128.1 670.0C1134.1 676.3 1130.0 672.7 1131.0 674.0L1030 674Z" fill="#f4ecda" stroke="#cfc4b0" stroke-width=".8"/>
<path d="M729 548 L880 545 L931.5 468 L931 600 L935 674 L733 674 Z" fill="#e9c9b3"/>
<path d="M875 674 L897.5 651 L916 636 L932 622 L940 600 L940 674 Z" fill="#efe4d1"/>
<path d="M875 672 L897.5 651 L916 636 L930 624" stroke="#dcc9b4" stroke-width=".7" fill="none"/>
<path d="M781.3 613.8C783.5 617.2 782.4 618.4 788.0 624.0C793.6 629.6 790.2 627.7 798.0 630.5C805.8 633.3 806.9 631.8 811.3 632.5" stroke="#c9b3a6" stroke-width=".9" fill="none"/>
<path d="M737.5 583 V674" stroke="#d3b59f" stroke-width=".7"/>
<path d="M683.8 596.5C682.5 599.1 682.5 598.6 680.0 604.4C677.5 610.1 679.4 605.0 676.3 613.8C673.1 622.5 674.4 619.4 670.6 630.6C666.9 641.9 669.4 633.8 665.0 647.5C660.6 661.3 660.0 663.8 657.5 671.9L668.8 674 C670.6 664.4 670.0 665.0 674.4 649.4C678.8 633.8 677.5 638.8 681.9 625.0C686.3 611.3 684.1 618.1 687.5 608.1C690.9 598.1 690.6 599.4 692.2 595.0Z" fill="#f6c07e"/>
<path d="M691.3 595.0C692.5 593.6 690.6 593.4 695.0 590.9C699.4 588.4 698.8 589.6 704.4 587.5C710.0 585.4 706.9 588.4 711.9 584.7C716.9 580.9 714.4 581.9 719.4 576.3C724.4 570.6 724.4 570.6 726.9 567.8C727.5 570.0 729.4 565.3 728.8 574.4C728.1 583.4 727.5 580.6 725.0 595.0C722.5 609.4 723.8 602.5 721.3 617.5C718.8 632.5 720.0 621.9 717.5 640.0C715.0 658.1 715.0 661.3 713.8 671.9L666.5 674C668.5 664.4 668.0 665.0 672.5 649.4C677.0 633.8 675.6 638.8 680.0 625.0C684.4 611.3 681.9 618.1 685.6 608.1C689.4 598.1 689.4 599.4 691.3 595.0Z" fill="#9b98a9" stroke="#8a8797" stroke-width=".6"/>
<path d="M725.4 569.1C723.4 572.8 723.3 572.6 719.4 580.0C715.5 587.4 717.5 582.5 713.8 591.3C710.0 600.0 711.6 596.3 708.1 606.3C704.7 616.3 706.9 610.6 703.4 621.3C700.0 631.9 701.3 626.9 697.8 638.1C694.4 649.4 696.1 643.8 693.1 655.0C690.2 666.3 690.4 666.3 689.0 671.9L699.1 674C700.6 666.3 699.8 668.1 703.4 655.0C707.1 641.9 705.6 646.9 710.0 632.5C714.4 618.1 712.7 625.0 716.6 611.9C720.4 598.8 718.7 603.8 721.6 593.1C724.6 582.5 723.4 588.0 725.4 580.0C727.4 572.0 726.9 572.8 727.6 569.1Z" fill="#b9b5cd"/>
<path d="M710.0 585.6C708.1 590.6 708.1 590.0 704.4 600.6C700.6 611.3 702.5 605.6 698.8 617.5C695.0 629.4 696.6 623.8 693.1 636.3C689.7 648.8 691.1 643.1 688.4 655.0C685.8 666.9 686.3 666.3 685.3 671.9" stroke="#8a8797" stroke-width=".8" fill="none"/>
<path d="M727.4 569.1C727.9 570.9 729.6 565.8 728.8 574.4C727.9 583.0 727.5 580.6 725.0 595.0C722.5 609.4 723.8 602.5 721.3 617.5C718.8 632.5 720.1 621.9 717.5 640.0C714.9 658.1 714.8 661.3 713.4 671.9L723.5 674C724.0 665.0 723.3 666.9 725.0 651.3C726.8 635.6 726.3 640.6 728.8 625.0C731.3 609.4 729.7 618.1 732.5 604.4C735.3 590.6 736.3 591.9 737.2 583.8C738.1 575.6 735.9 581.3 735.3 580.0Z" fill="#fcd67a"/>
<path d="M735.9 580.9L731.6 604.4L727.8 625.0L724.1 651.3L722.8 671.9L730.3 671.9L729.7 640.0L733.4 604.4L737.6 583.0Z" fill="#fbe39a"/>
<path d="M723.1 671.9L725.0 655.0L727.8 640.0L729.7 671.9Z" fill="#f4ecda"/>
<path d="M736.8 583.0C735.7 590.1 735.8 587.9 733.4 604.4C731.1 620.9 731.4 616.9 729.7 632.5C728.0 648.1 728.6 638.1 728.4 651.3C728.2 664.4 728.9 665.0 729.1 671.9L738.5 674 L737.4 583.0Z" fill="#fde593"/>
<path d="M930.3 534.0C933.7 534.6 932.8 531.8 940.6 535.9C948.4 540.0 946.9 537.5 953.8 546.3C960.7 555.1 958.8 556.9 961.3 562.2C965.0 562.8 965.6 559.9 972.5 564.0C979.4 568.1 977.5 567.8 981.9 574.4C986.3 581.0 984.4 580.7 985.6 583.8C991.2 583.2 992.5 580.4 1002.5 581.9C1012.5 583.4 1008.7 583.7 1015.6 588.4C1022.5 593.1 1020.6 593.4 1023.1 595.9C1028.7 595.6 1028.1 592.8 1040.0 595.0C1051.9 597.2 1047.5 596.2 1058.8 602.5C1070.1 608.8 1068.8 610.0 1073.8 613.8C1070.0 616.3 1070.6 613.8 1062.5 621.3C1054.4 628.8 1057.5 625.7 1049.4 636.3C1041.3 646.9 1045.4 640.5 1038.1 653.1C1030.8 665.7 1031.0 667.0 1027.5 674.0L923.5 674C924.8 669.5 925.2 676.9 927.5 660.6C929.8 644.3 927.8 645.0 930.3 625.0C932.8 605.0 931.9 615.0 935.0 600.6C938.1 586.2 937.2 594.1 939.7 581.9C942.2 569.7 941.6 570.0 942.5 564.0L931 564Z" fill="#9b98a9" stroke="#8a8797" stroke-width=".7"/>
<path d="M983.8 611.9L965.0 625.0L948.1 647.5L942.5 674.0L953.8 674.0L965.0 647.5L980.0 625.0L989.4 611.9Z" fill="#a5a2b7"/>
<path d="M1010.0 617.5L995.0 640.0L981.9 662.5L974.4 674.0L991.3 674.0L1002.5 649.4L1011.9 630.6L1012.8 621.3Z" fill="#a5a2b7"/>
<path d="M1034.4 647.5L1023.1 655.0L1015.6 674.0L1028.8 674.0L1036.3 651.3Z" fill="#a5a2b7"/>
<path d="M936.9 595.0L950.9 593.1L948.1 625.0L928.4 660.6L931.0 625.0Z" fill="#b9b5cd"/>
<path d="M961.3 562.2C962.2 567.1 962.8 566.7 964.0 577.0C965.2 587.3 964.7 587.7 965.0 593.0" stroke="#8a8797" stroke-width=".8" fill="none"/>
<path d="M985.6 583.8C981.2 588.8 981.9 587.6 972.5 598.8C963.1 610.0 967.5 603.8 957.5 617.5C947.5 631.2 952.5 625.0 942.5 640.0C932.5 655.0 932.5 655.0 927.5 662.5" stroke="#8a8797" stroke-width=".8" fill="none"/>
<path d="M1023.1 595.9C1017.5 601.9 1016.9 600.3 1006.3 613.8C995.7 627.3 1000.1 622.6 991.3 636.3C982.5 650.0 986.9 643.1 980.0 655.0C973.1 666.9 973.7 666.3 970.6 672.0" stroke="#8a8797" stroke-width=".8" fill="none"/>
<path d="M1026.9 636.3C1024.4 642.5 1024.4 643.1 1019.4 655.0C1014.4 666.9 1014.4 666.3 1011.9 672.0" stroke="#8a8797" stroke-width=".8" fill="none"/>
<path d="M1073.8 613.8C1075.3 616.3 1077.8 616.3 1078.4 621.3C1079.0 626.3 1077.8 626.0 1075.6 628.8C1073.4 631.6 1077.5 623.5 1071.9 629.7C1066.3 635.9 1066.9 635.3 1058.8 647.5C1050.7 659.7 1052.8 657.5 1047.5 666.3C1042.2 675.1 1044.5 671.4 1043.0 674.0L1027 674C1030.7 667.0 1030.6 665.7 1038.1 653.1C1045.6 640.5 1041.3 646.9 1049.4 636.3C1057.5 625.7 1054.4 628.8 1062.5 621.3C1070.6 613.8 1070.0 616.3 1073.8 613.8Z" fill="url(#trimg)"/>
<path d="M933.0 564.0C932.7 568.1 934.7 564.7 932.2 576.3C929.7 587.9 930.9 582.6 925.6 598.8C920.3 615.0 922.5 608.8 916.3 625.0C910.1 641.2 913.2 631.2 906.9 647.5C900.6 663.8 900.6 665.2 897.5 674.0L908 674C910.8 665.8 910.4 665.7 916.3 649.4C922.2 633.1 919.4 641.3 925.6 625.0C931.8 608.7 930.3 615.0 935.0 600.6C939.7 586.2 937.2 593.4 939.7 581.9C942.2 570.4 941.6 571.3 942.5 566.0L942 564Z" fill="#fde593" stroke="#f1d27c" stroke-width=".5"/>
<path d="M909.5 674 L918 652 L928 628 L926 660 L923 674Z" fill="#f4ecda"/>
<path d="M681.5 335.0C681.4 350.0 681.3 355.0 681.3 380.0C681.3 405.0 681.2 388.3 681.5 410.0C681.8 431.7 681.6 426.3 682.3 445.0C683.0 463.7 682.0 453.0 683.6 466.0C685.2 479.0 683.5 471.7 687.0 484.0C690.5 496.3 689.2 490.9 694.1 503.0C699.0 515.1 695.4 507.5 701.7 520.2C708.0 532.9 704.9 527.1 713.1 541.0C721.3 554.9 717.5 550.5 726.4 561.9C735.3 573.3 730.2 567.6 739.7 575.2C749.2 582.8 743.4 579.2 754.8 584.6C766.2 590.0 761.1 588.8 773.8 591.3C786.5 593.8 780.2 593.2 792.8 592.2C805.4 591.2 799.1 592.8 811.7 588.4C824.3 584.0 818.1 585.9 830.7 579.0C843.3 572.1 837.0 575.2 849.6 567.6C862.2 560.0 855.9 564.4 868.6 556.2C881.3 548.0 875.0 553.0 887.6 542.9C900.2 532.8 895.1 538.5 906.5 525.9C917.9 513.3 914.4 517.6 921.7 505.0C929.0 492.4 924.9 501.3 928.5 488.0C932.1 474.7 928.7 481.0 932.5 465.0C936.3 449.0 935.5 461.7 940.0 440.0C944.5 418.3 940.7 423.3 946.0 400.0C951.3 376.7 949.3 390.0 956.0 370.0C962.7 350.0 962.7 350.0 966.0 340.0L900 320 L690 320Z" fill="#e9c9b3" stroke="#d3b29c" stroke-width=".8"/>
<path d="M885 326 L893.8 333 C907.5 337.6 912.1 338.1 935.0 346.8C957.9 355.5 948.7 351.7 962.5 359.0C976.3 366.3 965.8 356.5 976.3 368.8C986.8 381.1 988.1 386.9 994.0 396.0 C992.0 392.3 993.3 390.3 988.0 385.0C982.7 379.7 986.5 381.7 978.0 380.0C969.5 378.3 971.3 378.7 962.5 380.0C953.7 381.3 957.7 380.0 951.5 384.0C945.3 388.0 947.7 386.7 944.0 392.0C940.3 397.3 943.5 389.4 940.5 400.0C937.5 410.6 937.3 408.5 935.0 423.8C932.7 439.1 934.1 438.5 933.7 445.8 L918.5 445.8 C919.4 433.9 921.8 432.0 921.3 410.0C920.8 388.0 921.6 398.1 917.0 379.8C912.4 361.5 913.5 368.8 907.5 355.0C901.5 341.2 906.5 348.2 899.0 338.5C891.5 328.8 889.7 330.2 885.0 326.0Z" fill="#978d88"/>
<path d="M941.4 393.8C945.5 380.0 941.4 388.3 947.6 381.4C953.8 374.5 951.7 376.6 960.0 373.1C968.3 369.7 964.1 370.0 972.4 371.0C980.7 372.1 978.3 370.0 984.8 376.2C991.4 382.4 989.3 380.3 992.1 389.7C994.8 399.0 994.1 393.1 993.1 404.1C992.1 415.2 993.1 410.3 989.0 422.8C984.8 435.2 986.6 429.0 980.7 441.4C974.8 453.8 977.6 450.4 971.4 460.0C965.2 469.7 968.6 464.8 962.1 470.4C955.5 475.9 958.6 474.8 951.7 476.6C944.8 478.3 947.2 478.6 941.4 475.5C935.5 472.4 936.9 473.8 934.1 467.3C931.4 460.7 932.8 470.7 933.1 455.9C933.5 441.0 932.4 443.5 935.2 422.8C937.9 402.1 937.2 407.6 941.4 393.8Z" fill="#e9c9b3" stroke="#d3b29c" stroke-width=".8"/>
<path d="M953.8 408.3C957.9 403.5 956.9 402.8 962.1 404.1C967.2 405.5 967.2 404.8 969.3 412.4C971.4 420.0 972.1 419.3 968.3 426.9C964.5 434.5 964.1 429.0 957.9 435.2C951.7 441.4 953.8 442.8 949.7 445.5C945.5 448.3 945.2 448.3 945.5 443.5C945.9 438.6 949.3 439.3 950.7 431.0C952.1 422.8 948.6 426.2 949.7 418.6C950.7 411.0 949.7 413.1 953.8 408.3Z" fill="#e0c1ac"/>
<path d="M949.7 416.6C952.4 409.0 951.0 404.8 957.9 393.8C964.8 382.8 963.1 385.5 970.3 383.5C977.6 381.4 975.9 381.4 979.7 387.6C983.5 393.8 981.7 393.1 981.7 402.1C981.7 411.0 980.4 410.3 979.7 414.5" stroke="#d6b6a1" stroke-width=".9" fill="none"/>
<path d="M954.2 408.3C952.8 411.7 951.2 411.0 950.1 418.6C949.0 426.2 952.3 422.8 950.9 431.0C949.5 439.3 946.6 437.9 945.9 443.5C945.2 449.0 947.9 446.2 948.8 447.6" stroke="#d6b6a1" stroke-width=".8" fill="none"/>
<clipPath id="hatclip"><path d="M677.3 351.0C672.6 345.5 675.5 351.9 663.3 334.6C651.1 317.3 654.9 325.3 640.6 299.2C626.3 273.1 630.8 281.5 620.3 256.2C609.8 230.9 614.5 241.8 609.0 223.3C603.5 204.8 606.2 213.0 603.9 200.6C601.6 188.2 602.4 194.2 602.2 186.0C602.0 177.8 601.9 181.8 603.2 176.0C604.5 170.2 603.4 172.6 606.0 168.5C608.6 164.4 607.0 166.1 611.0 163.6C615.0 161.1 613.0 162.1 618.0 161.0C623.0 159.9 620.7 160.3 626.0 160.2C631.3 160.1 626.0 159.2 634.0 160.8C642.0 162.4 639.4 161.9 650.0 165.0C660.6 168.1 649.7 164.7 665.9 170.2C682.1 175.7 684.4 177.0 698.7 181.6C713.0 186.2 705.5 183.3 708.9 184.1C713.9 182.8 704.6 183.4 724.0 180.3C743.4 177.2 743.4 177.1 767.0 174.8C790.6 172.5 773.9 173.6 794.9 173.5C815.9 173.4 806.1 173.1 830.0 174.5C853.9 175.9 846.3 175.3 866.5 177.7C886.7 180.1 875.8 178.9 890.6 181.6C905.4 184.3 894.8 181.1 910.8 185.7C926.8 190.3 929.3 192.2 938.6 195.5C950.4 193.0 947.9 192.8 974.0 187.9C1000.1 183.0 994.2 184.0 1017.0 180.9C1039.8 177.8 1028.0 179.4 1042.3 178.6C1056.6 177.8 1049.0 177.2 1060.0 178.6C1071.0 180.0 1065.1 177.7 1075.2 182.9C1085.3 188.1 1082.6 185.0 1090.4 194.3C1098.2 203.6 1095.6 201.0 1098.5 210.7C1101.4 220.4 1101.1 209.8 1099.2 223.3C1097.3 236.8 1100.1 228.4 1092.9 251.2C1085.7 274.0 1087.8 268.0 1077.7 291.6C1067.6 315.2 1073.5 303.6 1062.6 322.0C1051.7 340.4 1060.0 329.5 1045.0 346.8C1030.0 364.1 1034.5 357.6 1017.5 374.0C1000.5 390.4 1001.8 388.7 994.0 396.0C988.1 386.9 986.8 381.1 976.3 368.8C965.8 356.5 976.3 366.3 962.5 359.0C948.7 351.7 957.9 355.5 935.0 346.8C912.1 338.1 921.3 341.3 893.8 333.0C866.3 324.7 877.9 326.3 852.5 322.0C827.1 317.7 841.9 320.7 817.6 320.0C793.3 319.3 803.3 319.2 779.7 320.0C756.1 320.8 767.9 319.7 746.8 322.5C725.7 325.3 735.0 323.0 716.5 328.3C698.0 333.6 704.3 330.8 691.2 338.4C678.1 346.0 681.9 346.8 677.3 351.0Z"/></clipPath><clipPath id="pocketclip"><path d="M708.9 184.1C713.9 182.8 704.6 183.4 724.0 180.3C743.4 177.2 743.4 177.1 767.0 174.8C790.6 172.5 773.9 173.6 794.9 173.5C815.9 173.4 806.1 173.1 830.0 174.5C853.9 175.9 846.3 175.3 866.5 177.7C886.7 180.1 875.8 178.9 890.6 181.6C905.4 184.3 894.8 181.1 910.8 185.7C926.8 190.3 929.3 192.2 938.6 195.5C922.6 199.6 920.1 201.7 890.7 207.8C861.3 213.9 875.3 212.5 850.4 213.9C825.5 215.3 835.5 213.5 816.0 212.0C796.5 210.5 807.3 211.2 792.0 209.4C776.7 207.6 784.7 209.0 770.0 206.5C755.3 204.0 764.2 206.1 748.0 202.0C731.8 197.9 734.5 200.3 721.5 194.3C708.5 188.3 713.1 187.5 708.9 184.1Z"/></clipPath>
<path d="M677.3 351.0C672.6 345.5 675.5 351.9 663.3 334.6C651.1 317.3 654.9 325.3 640.6 299.2C626.3 273.1 630.8 281.5 620.3 256.2C609.8 230.9 614.5 241.8 609.0 223.3C603.5 204.8 606.2 213.0 603.9 200.6C601.6 188.2 602.4 194.2 602.2 186.0C602.0 177.8 601.9 181.8 603.2 176.0C604.5 170.2 603.4 172.6 606.0 168.5C608.6 164.4 607.0 166.1 611.0 163.6C615.0 161.1 613.0 162.1 618.0 161.0C623.0 159.9 620.7 160.3 626.0 160.2C631.3 160.1 626.0 159.2 634.0 160.8C642.0 162.4 639.4 161.9 650.0 165.0C660.6 168.1 649.7 164.7 665.9 170.2C682.1 175.7 684.4 177.0 698.7 181.6C713.0 186.2 705.5 183.3 708.9 184.1C713.9 182.8 704.6 183.4 724.0 180.3C743.4 177.2 743.4 177.1 767.0 174.8C790.6 172.5 773.9 173.6 794.9 173.5C815.9 173.4 806.1 173.1 830.0 174.5C853.9 175.9 846.3 175.3 866.5 177.7C886.7 180.1 875.8 178.9 890.6 181.6C905.4 184.3 894.8 181.1 910.8 185.7C926.8 190.3 929.3 192.2 938.6 195.5C950.4 193.0 947.9 192.8 974.0 187.9C1000.1 183.0 994.2 184.0 1017.0 180.9C1039.8 177.8 1028.0 179.4 1042.3 178.6C1056.6 177.8 1049.0 177.2 1060.0 178.6C1071.0 180.0 1065.1 177.7 1075.2 182.9C1085.3 188.1 1082.6 185.0 1090.4 194.3C1098.2 203.6 1095.6 201.0 1098.5 210.7C1101.4 220.4 1101.1 209.8 1099.2 223.3C1097.3 236.8 1100.1 228.4 1092.9 251.2C1085.7 274.0 1087.8 268.0 1077.7 291.6C1067.6 315.2 1073.5 303.6 1062.6 322.0C1051.7 340.4 1060.0 329.5 1045.0 346.8C1030.0 364.1 1034.5 357.6 1017.5 374.0C1000.5 390.4 1001.8 388.7 994.0 396.0C988.1 386.9 986.8 381.1 976.3 368.8C965.8 356.5 976.3 366.3 962.5 359.0C948.7 351.7 957.9 355.5 935.0 346.8C912.1 338.1 921.3 341.3 893.8 333.0C866.3 324.7 877.9 326.3 852.5 322.0C827.1 317.7 841.9 320.7 817.6 320.0C793.3 319.3 803.3 319.2 779.7 320.0C756.1 320.8 767.9 319.7 746.8 322.5C725.7 325.3 735.0 323.0 716.5 328.3C698.0 333.6 704.3 330.8 691.2 338.4C678.1 346.0 681.9 346.8 677.3 351.0Z" fill="url(#hatg)"/>
<g clip-path="url(#hatclip)"><g fill="none" stroke="#8f6d6c" stroke-width="16" opacity=".5" filter="url(#blur6)" transform="translate(-12.5 0)"><path d="M598.0 215.0C600.4 212.6 597.4 215.3 605.2 207.9C613.0 200.5 609.8 202.5 621.3 192.9C632.8 183.3 627.4 187.5 639.7 179.1C652.0 170.7 648.0 174.0 658.1 167.6C668.2 161.2 666.0 162.5 670.0 160.0"/><path d="M614.0 256.0C616.4 252.6 614.3 254.9 621.3 245.8C628.3 236.7 624.4 239.7 635.1 228.6C645.8 217.5 640.5 222.9 653.5 212.5C666.5 202.1 660.4 206.3 674.2 197.5C688.0 188.7 682.3 192.8 694.9 186.0C707.5 179.2 706.3 180.0 712.0 177.0"/><path d="M636.0 310.0C638.0 306.2 637.3 307.5 642.0 298.7C646.7 289.9 643.1 295.6 650.0 283.7C656.9 271.8 653.1 276.8 662.7 263.0C672.3 249.2 667.3 255.4 678.8 242.4C690.3 229.4 684.7 235.1 697.1 224.0C709.5 212.9 703.7 217.1 716.0 209.0C728.3 200.9 723.2 205.5 733.9 199.8C744.6 194.1 743.3 194.6 748.0 192.0"/><path d="M668.0 356.0C669.7 351.1 669.4 351.5 673.0 341.2C676.6 330.9 673.0 336.6 678.8 325.1C684.6 313.6 681.9 318.6 690.3 306.7C698.7 294.8 695.4 299.5 704.0 289.5C712.6 279.5 706.0 287.2 716.0 276.8C726.0 266.4 721.0 270.6 733.9 258.4C746.8 246.2 740.8 251.6 754.6 240.1C768.4 228.6 762.3 233.6 775.3 224.0C788.3 214.4 783.5 218.0 793.7 211.3C803.9 204.6 801.9 206.4 806.0 204.0"/><path d="M704.0 338.0C707.5 334.6 706.4 335.6 714.4 327.8C722.4 320.0 718.8 323.1 728.0 314.5C737.2 305.9 732.7 310.0 742.0 302.0C751.3 294.0 746.8 297.9 756.0 290.5C765.2 283.1 759.9 287.7 769.6 279.9C779.3 272.1 779.9 271.3 785.0 267.0"/><path d="M762.0 334.0C766.3 331.0 765.7 331.0 775.0 325.0C784.3 319.0 780.0 321.7 790.0 316.0C800.0 310.3 795.0 313.0 805.0 308.0C815.0 303.0 815.0 303.3 820.0 301.0"/><path d="M606.0 222.0C608.4 226.5 605.8 224.1 613.2 235.5C620.6 246.9 619.4 243.1 628.2 256.1C637.0 269.1 632.4 263.0 639.7 274.5C647.0 286.0 642.3 277.9 650.0 290.6C657.7 303.3 654.6 298.7 662.7 312.5C670.8 326.3 667.3 320.2 674.2 332.0C681.1 343.8 678.1 338.7 683.4 348.0C688.7 357.3 687.8 356.0 690.0 360.0"/><path d="M617.0 150.0C618.0 154.0 617.1 151.0 620.1 161.9C623.1 172.8 621.3 167.3 625.9 182.6C630.5 197.9 627.4 191.8 633.9 207.9C640.4 224.0 636.6 214.8 645.4 230.9C654.2 247.0 649.7 238.5 660.4 256.1C671.1 273.7 665.4 265.3 677.6 283.7C689.8 302.1 684.5 296.0 697.1 311.3C709.7 326.6 705.2 320.1 715.5 329.7C725.8 339.3 723.8 336.6 728.0 340.0"/><path d="M660.0 158.0C661.7 161.6 659.9 157.5 665.0 168.8C670.1 180.1 667.6 175.7 675.3 191.8C683.0 207.9 679.9 202.3 688.0 217.0C696.1 231.7 690.3 223.0 699.7 236.0C709.1 249.0 705.2 240.7 716.2 256.0C727.2 271.3 720.5 265.9 732.8 281.8C745.1 297.7 739.5 290.3 753.0 303.8C766.5 317.3 763.0 313.1 773.3 322.2C783.6 331.3 780.4 328.1 784.0 331.0"/><path d="M722.0 190.0C725.0 194.8 723.7 192.8 731.0 204.4C738.3 216.0 734.7 210.6 743.9 224.7C753.1 238.8 748.8 232.7 758.6 246.8C768.4 260.9 764.8 255.6 773.3 267.0C781.8 278.4 780.4 276.3 784.0 281.0"/><path d="M846.0 251.0C849.2 256.0 849.2 255.8 855.6 266.0C862.0 276.2 858.1 271.9 865.3 281.7C872.5 291.5 869.6 284.2 877.1 295.3C884.6 306.4 881.3 303.8 887.8 314.9C894.3 326.0 891.2 319.9 896.6 328.6C902.0 337.3 901.5 336.9 904.0 341.0"/><path d="M840.0 204.0C843.6 207.7 841.0 205.0 850.7 215.2C860.4 225.4 856.5 220.4 869.2 234.7C881.9 249.0 877.1 245.2 888.8 258.2C900.5 271.2 894.0 260.8 904.4 273.8C914.8 286.8 911.6 284.3 920.1 297.3C928.6 310.3 922.6 299.9 929.8 312.9C937.0 325.9 936.4 324.0 941.6 336.4C946.8 348.8 943.0 341.5 945.5 350.0C948.0 358.5 947.8 358.0 949.0 362.0"/><path d="M888.0 199.0C890.2 201.1 890.5 201.0 894.7 205.4C898.9 209.8 892.0 204.5 900.5 212.3C909.0 220.1 907.7 217.5 920.1 228.9C932.5 240.3 927.9 234.8 937.7 246.5C947.5 258.2 942.3 251.6 949.4 264.1C956.5 276.6 951.3 269.0 959.0 284.0C966.7 299.0 964.5 293.0 972.5 309.0C980.5 325.0 976.2 315.7 983.0 332.0C989.8 348.3 986.8 340.3 993.0 358.0C999.2 375.7 997.8 371.7 1001.5 385.0C1005.2 398.3 1003.2 393.7 1004.0 398.0"/><path d="M925.0 188.0C928.7 190.9 929.1 192.5 936.1 196.8C943.1 201.1 934.8 193.2 946.0 201.0C957.2 208.8 955.8 206.3 969.8 220.3C983.8 234.3 977.0 231.1 988.0 243.0C999.0 254.9 993.9 244.3 1002.9 256.0C1011.9 267.7 1007.8 262.8 1015.0 278.0C1022.2 293.2 1018.6 285.0 1024.6 301.7C1030.6 318.4 1027.9 311.1 1033.0 328.0C1038.1 344.9 1036.1 337.6 1039.8 352.3C1043.5 367.0 1042.6 365.4 1044.0 372.0"/><path d="M976.0 178.0C981.4 183.7 980.3 185.1 992.3 195.1C1004.3 205.1 998.3 197.0 1012.0 208.0C1025.7 219.0 1020.0 213.9 1033.3 228.2C1046.6 242.5 1042.2 235.4 1051.8 251.0C1061.4 266.6 1055.6 259.3 1062.0 275.0C1068.4 290.7 1066.0 284.3 1071.0 298.0C1076.0 311.7 1075.0 310.0 1077.0 316.0"/><path d="M1016.0 170.0C1020.6 173.4 1019.7 172.3 1029.7 180.3C1039.7 188.3 1035.2 184.1 1046.0 194.0C1056.8 203.9 1051.3 197.7 1062.0 210.0C1072.7 222.3 1068.3 216.0 1078.0 231.0C1087.7 246.0 1084.0 241.3 1091.0 255.0C1098.0 268.7 1096.3 266.3 1099.0 272.0"/><path d="M846.0 256.0C849.8 252.8 849.8 253.3 857.5 246.5C865.2 239.7 860.1 243.2 869.2 235.7C878.3 228.2 874.5 231.8 884.9 224.0C895.3 216.2 892.7 218.5 900.5 212.3C908.3 206.1 902.5 210.5 908.3 205.4C914.1 200.3 914.8 199.8 918.0 197.0"/><path d="M826.0 322.0C829.3 320.3 826.1 321.9 836.0 316.9C845.9 311.9 841.9 314.3 855.6 307.1C869.3 299.9 864.7 303.1 877.1 295.3C889.5 287.5 883.6 290.8 892.7 283.6C901.8 276.4 894.6 282.3 904.4 273.8C914.2 265.3 910.9 267.3 922.0 258.2C933.1 249.1 927.3 255.0 937.7 246.5C948.1 238.0 942.6 241.5 953.3 232.8C964.0 224.1 959.9 229.8 969.8 220.3C979.7 210.8 975.5 212.8 983.0 204.4C990.5 196.0 984.4 201.7 992.3 195.1C1000.2 188.5 998.2 190.9 1006.8 184.5C1015.4 178.1 1014.3 178.8 1018.0 176.0"/><path d="M876.0 338.0C879.6 336.2 879.3 336.3 886.8 332.5C894.3 328.7 889.5 331.8 898.6 326.6C907.7 321.4 904.1 322.8 914.2 316.9C924.3 311.0 918.3 315.6 928.9 309.0C939.5 302.4 933.2 306.3 946.0 297.0C958.8 287.7 948.2 294.8 967.2 281.1C986.2 267.4 980.9 273.6 1002.9 256.0C1024.9 238.4 1017.0 243.6 1033.3 228.2C1049.6 212.8 1041.2 222.0 1051.8 209.7C1062.4 197.4 1058.4 200.9 1065.0 191.2C1071.6 181.5 1067.3 187.7 1071.6 180.6C1075.9 173.5 1075.9 173.5 1078.0 170.0"/><path d="M934.0 361.0C938.0 358.2 930.5 362.4 946.0 352.5C961.5 342.6 957.5 346.3 980.4 331.3C1003.3 316.3 992.8 324.2 1014.8 307.5C1036.8 290.8 1027.1 298.7 1046.5 281.1C1065.9 263.5 1057.1 273.1 1073.0 254.6C1088.9 236.1 1085.3 238.7 1094.1 225.5C1102.9 212.3 1095.4 222.8 1099.4 215.0C1103.4 207.2 1103.8 206.3 1106.0 202.0"/></g></g>
<g clip-path="url(#hatclip)" fill="none" stroke="url(#latg)" stroke-width="9.6"><path d="M598.0 215.0C600.4 212.6 597.4 215.3 605.2 207.9C613.0 200.5 609.8 202.5 621.3 192.9C632.8 183.3 627.4 187.5 639.7 179.1C652.0 170.7 648.0 174.0 658.1 167.6C668.2 161.2 666.0 162.5 670.0 160.0"/><path d="M614.0 256.0C616.4 252.6 614.3 254.9 621.3 245.8C628.3 236.7 624.4 239.7 635.1 228.6C645.8 217.5 640.5 222.9 653.5 212.5C666.5 202.1 660.4 206.3 674.2 197.5C688.0 188.7 682.3 192.8 694.9 186.0C707.5 179.2 706.3 180.0 712.0 177.0"/><path d="M636.0 310.0C638.0 306.2 637.3 307.5 642.0 298.7C646.7 289.9 643.1 295.6 650.0 283.7C656.9 271.8 653.1 276.8 662.7 263.0C672.3 249.2 667.3 255.4 678.8 242.4C690.3 229.4 684.7 235.1 697.1 224.0C709.5 212.9 703.7 217.1 716.0 209.0C728.3 200.9 723.2 205.5 733.9 199.8C744.6 194.1 743.3 194.6 748.0 192.0"/><path d="M668.0 356.0C669.7 351.1 669.4 351.5 673.0 341.2C676.6 330.9 673.0 336.6 678.8 325.1C684.6 313.6 681.9 318.6 690.3 306.7C698.7 294.8 695.4 299.5 704.0 289.5C712.6 279.5 706.0 287.2 716.0 276.8C726.0 266.4 721.0 270.6 733.9 258.4C746.8 246.2 740.8 251.6 754.6 240.1C768.4 228.6 762.3 233.6 775.3 224.0C788.3 214.4 783.5 218.0 793.7 211.3C803.9 204.6 801.9 206.4 806.0 204.0"/><path d="M704.0 338.0C707.5 334.6 706.4 335.6 714.4 327.8C722.4 320.0 718.8 323.1 728.0 314.5C737.2 305.9 732.7 310.0 742.0 302.0C751.3 294.0 746.8 297.9 756.0 290.5C765.2 283.1 759.9 287.7 769.6 279.9C779.3 272.1 779.9 271.3 785.0 267.0"/><path d="M762.0 334.0C766.3 331.0 765.7 331.0 775.0 325.0C784.3 319.0 780.0 321.7 790.0 316.0C800.0 310.3 795.0 313.0 805.0 308.0C815.0 303.0 815.0 303.3 820.0 301.0"/><path d="M606.0 222.0C608.4 226.5 605.8 224.1 613.2 235.5C620.6 246.9 619.4 243.1 628.2 256.1C637.0 269.1 632.4 263.0 639.7 274.5C647.0 286.0 642.3 277.9 650.0 290.6C657.7 303.3 654.6 298.7 662.7 312.5C670.8 326.3 667.3 320.2 674.2 332.0C681.1 343.8 678.1 338.7 683.4 348.0C688.7 357.3 687.8 356.0 690.0 360.0"/><path d="M617.0 150.0C618.0 154.0 617.1 151.0 620.1 161.9C623.1 172.8 621.3 167.3 625.9 182.6C630.5 197.9 627.4 191.8 633.9 207.9C640.4 224.0 636.6 214.8 645.4 230.9C654.2 247.0 649.7 238.5 660.4 256.1C671.1 273.7 665.4 265.3 677.6 283.7C689.8 302.1 684.5 296.0 697.1 311.3C709.7 326.6 705.2 320.1 715.5 329.7C725.8 339.3 723.8 336.6 728.0 340.0"/><path d="M660.0 158.0C661.7 161.6 659.9 157.5 665.0 168.8C670.1 180.1 667.6 175.7 675.3 191.8C683.0 207.9 679.9 202.3 688.0 217.0C696.1 231.7 690.3 223.0 699.7 236.0C709.1 249.0 705.2 240.7 716.2 256.0C727.2 271.3 720.5 265.9 732.8 281.8C745.1 297.7 739.5 290.3 753.0 303.8C766.5 317.3 763.0 313.1 773.3 322.2C783.6 331.3 780.4 328.1 784.0 331.0"/><path d="M722.0 190.0C725.0 194.8 723.7 192.8 731.0 204.4C738.3 216.0 734.7 210.6 743.9 224.7C753.1 238.8 748.8 232.7 758.6 246.8C768.4 260.9 764.8 255.6 773.3 267.0C781.8 278.4 780.4 276.3 784.0 281.0"/><path d="M846.0 251.0C849.2 256.0 849.2 255.8 855.6 266.0C862.0 276.2 858.1 271.9 865.3 281.7C872.5 291.5 869.6 284.2 877.1 295.3C884.6 306.4 881.3 303.8 887.8 314.9C894.3 326.0 891.2 319.9 896.6 328.6C902.0 337.3 901.5 336.9 904.0 341.0"/><path d="M840.0 204.0C843.6 207.7 841.0 205.0 850.7 215.2C860.4 225.4 856.5 220.4 869.2 234.7C881.9 249.0 877.1 245.2 888.8 258.2C900.5 271.2 894.0 260.8 904.4 273.8C914.8 286.8 911.6 284.3 920.1 297.3C928.6 310.3 922.6 299.9 929.8 312.9C937.0 325.9 936.4 324.0 941.6 336.4C946.8 348.8 943.0 341.5 945.5 350.0C948.0 358.5 947.8 358.0 949.0 362.0"/><path d="M888.0 199.0C890.2 201.1 890.5 201.0 894.7 205.4C898.9 209.8 892.0 204.5 900.5 212.3C909.0 220.1 907.7 217.5 920.1 228.9C932.5 240.3 927.9 234.8 937.7 246.5C947.5 258.2 942.3 251.6 949.4 264.1C956.5 276.6 951.3 269.0 959.0 284.0C966.7 299.0 964.5 293.0 972.5 309.0C980.5 325.0 976.2 315.7 983.0 332.0C989.8 348.3 986.8 340.3 993.0 358.0C999.2 375.7 997.8 371.7 1001.5 385.0C1005.2 398.3 1003.2 393.7 1004.0 398.0"/><path d="M925.0 188.0C928.7 190.9 929.1 192.5 936.1 196.8C943.1 201.1 934.8 193.2 946.0 201.0C957.2 208.8 955.8 206.3 969.8 220.3C983.8 234.3 977.0 231.1 988.0 243.0C999.0 254.9 993.9 244.3 1002.9 256.0C1011.9 267.7 1007.8 262.8 1015.0 278.0C1022.2 293.2 1018.6 285.0 1024.6 301.7C1030.6 318.4 1027.9 311.1 1033.0 328.0C1038.1 344.9 1036.1 337.6 1039.8 352.3C1043.5 367.0 1042.6 365.4 1044.0 372.0"/><path d="M976.0 178.0C981.4 183.7 980.3 185.1 992.3 195.1C1004.3 205.1 998.3 197.0 1012.0 208.0C1025.7 219.0 1020.0 213.9 1033.3 228.2C1046.6 242.5 1042.2 235.4 1051.8 251.0C1061.4 266.6 1055.6 259.3 1062.0 275.0C1068.4 290.7 1066.0 284.3 1071.0 298.0C1076.0 311.7 1075.0 310.0 1077.0 316.0"/><path d="M1016.0 170.0C1020.6 173.4 1019.7 172.3 1029.7 180.3C1039.7 188.3 1035.2 184.1 1046.0 194.0C1056.8 203.9 1051.3 197.7 1062.0 210.0C1072.7 222.3 1068.3 216.0 1078.0 231.0C1087.7 246.0 1084.0 241.3 1091.0 255.0C1098.0 268.7 1096.3 266.3 1099.0 272.0"/><path d="M846.0 256.0C849.8 252.8 849.8 253.3 857.5 246.5C865.2 239.7 860.1 243.2 869.2 235.7C878.3 228.2 874.5 231.8 884.9 224.0C895.3 216.2 892.7 218.5 900.5 212.3C908.3 206.1 902.5 210.5 908.3 205.4C914.1 200.3 914.8 199.8 918.0 197.0"/><path d="M826.0 322.0C829.3 320.3 826.1 321.9 836.0 316.9C845.9 311.9 841.9 314.3 855.6 307.1C869.3 299.9 864.7 303.1 877.1 295.3C889.5 287.5 883.6 290.8 892.7 283.6C901.8 276.4 894.6 282.3 904.4 273.8C914.2 265.3 910.9 267.3 922.0 258.2C933.1 249.1 927.3 255.0 937.7 246.5C948.1 238.0 942.6 241.5 953.3 232.8C964.0 224.1 959.9 229.8 969.8 220.3C979.7 210.8 975.5 212.8 983.0 204.4C990.5 196.0 984.4 201.7 992.3 195.1C1000.2 188.5 998.2 190.9 1006.8 184.5C1015.4 178.1 1014.3 178.8 1018.0 176.0"/><path d="M876.0 338.0C879.6 336.2 879.3 336.3 886.8 332.5C894.3 328.7 889.5 331.8 898.6 326.6C907.7 321.4 904.1 322.8 914.2 316.9C924.3 311.0 918.3 315.6 928.9 309.0C939.5 302.4 933.2 306.3 946.0 297.0C958.8 287.7 948.2 294.8 967.2 281.1C986.2 267.4 980.9 273.6 1002.9 256.0C1024.9 238.4 1017.0 243.6 1033.3 228.2C1049.6 212.8 1041.2 222.0 1051.8 209.7C1062.4 197.4 1058.4 200.9 1065.0 191.2C1071.6 181.5 1067.3 187.7 1071.6 180.6C1075.9 173.5 1075.9 173.5 1078.0 170.0"/><path d="M934.0 361.0C938.0 358.2 930.5 362.4 946.0 352.5C961.5 342.6 957.5 346.3 980.4 331.3C1003.3 316.3 992.8 324.2 1014.8 307.5C1036.8 290.8 1027.1 298.7 1046.5 281.1C1065.9 263.5 1057.1 273.1 1073.0 254.6C1088.9 236.1 1085.3 238.7 1094.1 225.5C1102.9 212.3 1095.4 222.8 1099.4 215.0C1103.4 207.2 1103.8 206.3 1106.0 202.0"/></g>
<linearGradient id="pockg" gradientUnits="userSpaceOnUse" x1="0" y1="172" x2="0" y2="214"><stop offset="0" stop-color="#e0968e"/><stop offset=".45" stop-color="#d08f88"/><stop offset="1" stop-color="#b28480"/></linearGradient><g clip-path="url(#pocketclip)"><path d="M708.9 184.1C713.9 182.8 704.6 183.4 724.0 180.3C743.4 177.2 743.4 177.1 767.0 174.8C790.6 172.5 773.9 173.6 794.9 173.5C815.9 173.4 806.1 173.1 830.0 174.5C853.9 175.9 846.3 175.3 866.5 177.7C886.7 180.1 875.8 178.9 890.6 181.6C905.4 184.3 894.8 181.1 910.8 185.7C926.8 190.3 929.3 192.2 938.6 195.5C922.6 199.6 920.1 201.7 890.7 207.8C861.3 213.9 875.3 212.5 850.4 213.9C825.5 215.3 835.5 213.5 816.0 212.0C796.5 210.5 807.3 211.2 792.0 209.4C776.7 207.6 784.7 209.0 770.0 206.5C755.3 204.0 764.2 206.1 748.0 202.0C731.8 197.9 734.5 200.3 721.5 194.3C708.5 188.3 713.1 187.5 708.9 184.1Z" fill="url(#pockg)"/><path d="M708.9 184.1C713.1 187.5 708.5 188.3 721.5 194.3C734.5 200.3 731.8 197.9 748.0 202.0C764.2 206.1 755.3 204.0 770.0 206.5C784.7 209.0 776.7 207.6 792.0 209.4C807.3 211.2 796.5 210.5 816.0 212.0C835.5 213.5 825.5 215.3 850.4 213.9C875.3 212.5 861.3 213.9 890.7 207.8C920.1 201.7 922.6 199.6 938.6 195.5" stroke="#a97a76" stroke-width="10" fill="none" opacity=".45" transform="translate(0 -4)"/><g stroke="#fbdd7a" stroke-width="7" fill="none"><path d="M712.0 200.0C715.3 196.0 710.8 194.9 722.0 188.0C733.2 181.1 732.4 185.1 745.7 179.4C759.0 173.7 756.6 173.8 762.0 171.0"/><path d="M762.0 168.0C765.0 171.0 763.5 172.3 771.0 176.9C778.5 181.5 774.2 174.9 784.5 181.9C794.8 188.9 796.2 192.6 802.0 198.0"/><path d="M748.0 212.0C751.2 209.3 745.3 213.1 757.5 203.9C769.7 194.7 771.0 194.5 784.5 184.5C798.0 174.5 793.5 177.5 798.0 174.0"/><path d="M846.0 182.0C851.4 184.8 850.5 183.7 862.1 190.4C873.7 197.1 870.1 194.3 880.7 202.2C891.3 210.1 889.6 210.1 894.0 214.0"/><path d="M852.0 198.0C858.0 194.7 858.2 192.8 870.0 188.0C881.8 183.2 876.7 187.6 887.4 183.6C898.1 179.6 897.1 178.5 902.0 176.0"/><path d="M876.0 178.0C879.8 179.9 870.6 178.3 887.4 183.6C904.2 188.9 906.1 188.0 926.3 193.8C946.5 199.6 940.8 198.6 948.0 201.0"/><path d="M905.0 214.0C911.7 209.3 913.3 208.7 925.0 200.0C936.7 191.3 935.0 192.0 940.0 188.0"/></g></g>
<path d="M708.9 184.1C713.1 187.5 708.5 188.3 721.5 194.3C734.5 200.3 731.8 197.9 748.0 202.0C764.2 206.1 755.3 204.0 770.0 206.5C784.7 209.0 776.7 207.6 792.0 209.4C807.3 211.2 796.5 210.5 816.0 212.0C835.5 213.5 825.5 215.3 850.4 213.9C875.3 212.5 861.3 213.9 890.7 207.8C920.1 201.7 922.6 199.6 938.6 195.5" stroke="#c98a80" stroke-width=".8" fill="none" opacity=".6"/>
<path d="M791.1 177.7L796.1 175.7L793.1 165.6L800.2 170.6L797.1 150.5L803.2 157.6L800.2 127.4L805.2 131.4L809.2 113.3L813.2 121.4L818.3 97.2L823.3 109.3L831.3 84.2L833.3 94.2L840.4 78.1L842.4 91.2L858.5 63.0L851.4 89.2L864.5 71.1L879.6 59.0L876.6 65.1L890.7 59.0L888.6 64.0L902.7 59.4L896.7 66.1L921.8 63.4L917.8 69.1L947.0 68.7L942.9 74.1L975.1 86.2L963.0 85.2L973.1 95.2L978.1 115.3L969.1 103.3L955.0 97.2L961.0 106.3L942.9 100.2L947.0 109.3L930.9 105.3L936.9 111.3L920.8 110.3L933.9 118.3L908.7 121.4L918.8 131.4L898.7 132.4L908.7 135.4L888.6 139.5L897.7 145.5L884.6 149.5L889.6 148.5L878.6 154.5L887.6 156.5L868.5 165.6L875.6 168.6L854.5 182.7L867.5 180.7L850.4 195.8L838.4 201.8L848.4 210.8L836.4 207.8L818.3 191.7L800.2 199.8L792.1 193.7L795.1 187.7Z" fill="#d9aec5" stroke="#bf97b3" stroke-width=".8" stroke-linejoin="round"/>
<path d="M818.3 191.7L836.4 175.7L856.5 159.6L874.6 149.5L890.7 135.4L910.8 121.4L926.8 109.3L942.9 101.2L955.0 97.2L961.0 106.3L942.9 100.2L947.0 109.3L930.9 105.3L936.9 111.3L920.8 110.3L933.9 118.3L908.7 121.4L918.8 131.4L898.7 132.4L908.7 135.4L888.6 139.5L897.7 145.5L884.6 149.5L889.6 148.5L878.6 154.5L887.6 156.5L868.5 165.6L875.6 168.6L854.5 182.7L867.5 180.7L850.4 195.8L838.4 201.8L848.4 210.8L836.4 207.8Z" fill="#c9a0bb" opacity=".8"/>
<path d="M818.3 191.7C820.9 183.7 818.9 186.4 826.3 167.6C833.7 148.8 829.0 154.9 840.4 135.4C851.8 116.0 845.1 124.0 860.5 109.3C875.9 94.5 867.2 100.9 886.6 91.2C906.1 81.5 908.1 83.8 918.8 80.1" stroke="#b48fa9" stroke-width=".9" fill="none"/>
<path d="M839.4 95.2C839.0 99.9 838.0 100.6 838.4 109.3C838.7 118.0 839.7 117.3 840.4 121.4" stroke="#c29ab5" stroke-width=".8" fill="none"/>
<path d="M829.3 115.3C828.7 119.3 827.0 120.0 827.3 127.4C827.6 134.8 829.3 134.1 830.3 137.4" stroke="#c29ab5" stroke-width=".8" fill="none"/>
<path d="M819.3 133.4C819.3 136.8 817.9 136.8 819.3 143.5C820.6 150.2 821.9 150.2 823.3 153.5" stroke="#c29ab5" stroke-width=".8" fill="none"/>
<path d="M810.2 155.5C810.9 158.9 810.2 159.6 812.2 165.6C814.2 171.6 814.9 171.0 816.2 173.6" stroke="#c29ab5" stroke-width=".8" fill="none"/>
<path d="M850.4 129.4C855.1 129.1 855.8 131.1 864.5 128.4C873.2 125.7 872.6 123.7 876.6 121.4" stroke="#c29ab5" stroke-width=".8" fill="none"/>
<path d="M844.4 143.5C848.4 143.5 849.1 145.2 856.5 143.5C863.8 141.8 863.2 140.1 866.5 138.5" stroke="#c29ab5" stroke-width=".8" fill="none"/>
<path d="M836.4 157.6C840.4 157.9 841.1 159.6 848.4 158.6C855.8 157.6 855.1 155.9 858.5 154.5" stroke="#c29ab5" stroke-width=".8" fill="none"/>
<path d="M828.3 175.7C832.3 175.7 833.0 176.7 840.4 175.7C847.8 174.6 847.1 173.6 850.4 172.6" stroke="#c29ab5" stroke-width=".8" fill="none"/>
<path d="M815.9 190.4 C830.8 196.0 858.5 228.7 858.5 260.0 C858.5 288.5 842.3 306.0 815.9 306.0 C789.5 306.0 773.3 288.5 773.3 260.0 C773.3 228.7 801.0 196.0 815.9 190.4Z" fill="#fbe09a" stroke="#f4c878" stroke-width="1.2"/>
<path d="M815.9 195.0 C829.2 200.2 853.9 230.5 853.9 259.5 C853.9 285.5 839.5 301.5 815.9 301.5 C792.3 301.5 777.9 285.5 777.9 259.5 C777.9 230.5 802.6 200.2 815.9 195.0Z" fill="none" stroke="#fdf0bf" stroke-width="1.8" opacity=".8"/>
<path d="M816.2 199.5 C827.7 204.2 849.0 231.9 849.0 258.5 C849.0 282.7 836.5 297.5 816.2 297.5 C795.9 297.5 783.4 282.7 783.4 258.5 C783.4 231.9 804.7 204.2 816.2 199.5Z" fill="#ea8b73" stroke="#e9a56c" stroke-width="1.6"/>
<path d="M816.0 203.5 C826.1 207.9 845.0 233.5 845.0 258.0 C845.0 280.0 834.0 293.5 816.0 293.5 C798.0 293.5 787.0 280.0 787.0 258.0 C787.0 233.5 805.9 207.9 816.0 203.5Z" fill="none" stroke="#d97a66" stroke-width=".8" opacity=".5"/>
<ellipse cx="814.5" cy="249" rx="23.5" ry="37.5" fill="#f4beb2" transform="rotate(8 814.5 249)"/>
<ellipse cx="811.5" cy="248" rx="17.5" ry="30.5" fill="#fbe2dc" transform="rotate(10 811.5 248)"/>
<ellipse cx="835" cy="243" rx="5.2" ry="9.5" fill="#fbdcd5" transform="rotate(-18 835 243)"/>
<ellipse cx="829" cy="281" rx="12.5" ry="7" fill="#f9d0c6" transform="rotate(-32 829 281)"/>
<path d="M803 262 L829 251 L830 256 L804.5 268Z M805 270 L829 262 L829.5 266 L806.5 275Z" fill="#fdf1ee" opacity=".85"/>
<path d="M816 200 V212 M786 270 L797 266 M816 297 V285 L826 278 M846 262 L838 258" stroke="#e3846e" stroke-width=".8" fill="none" opacity=".7"/>
<ellipse cx="850.8" cy="238" rx="2.6" ry="5.2" fill="#fef6d8" transform="rotate(-12 850.8 238)"/><ellipse cx="780.6" cy="279.5" rx="2.6" ry="4.8" fill="#fef6d8" transform="rotate(-28 780.6 279.5)"/>
<path d="M683.8 369.0C683.9 366.0 683.5 363.3 688.9 356.2C694.4 349.1 691.8 351.4 700.1 347.6C708.5 343.8 704.7 344.9 713.9 344.8C723.1 344.7 718.5 344.3 727.7 347.2C736.9 350.2 734.6 350.0 741.5 353.8C748.4 357.6 745.5 355.3 748.4 358.6C751.3 362.0 751.2 360.7 750.1 363.8C749.1 366.8 749.9 366.7 745.3 367.8C740.7 368.8 743.4 369.0 736.3 366.9C729.3 364.8 732.9 364.1 724.3 361.4C715.7 358.6 719.7 359.0 710.5 358.6C701.3 358.3 704.0 358.2 696.7 360.3C689.3 362.5 692.7 362.3 688.4 365.2C684.1 368.0 683.6 372.0 683.8 369.0Z" fill="#91867f"/>
<path d="M780.8 359.3C782.4 354.6 779.9 355.3 786.3 350.7C792.8 346.1 789.8 348.4 800.1 345.5C810.5 342.6 805.3 343.6 817.4 342.1C829.4 340.6 825.4 340.2 836.3 341.0C847.3 341.8 841.5 340.7 850.1 344.5C858.8 348.3 855.3 346.6 862.2 352.4C869.1 358.2 866.1 356.1 870.8 361.9C875.5 367.6 876.9 368.8 876.3 369.7C875.8 370.5 876.1 368.2 869.1 364.5C862.1 360.8 865.1 361.5 855.3 358.6C845.5 355.7 850.7 356.2 839.8 355.9C828.9 355.5 833.5 355.5 822.6 357.6C811.6 359.7 816.2 359.1 807.0 362.1C797.8 365.0 802.0 364.3 795.0 366.4C788.0 368.5 790.5 369.0 786.0 368.4C781.5 367.9 783.2 367.9 781.5 364.8C779.8 361.8 779.2 364.0 780.8 359.3Z" fill="#91867f"/>
<clipPath id="lec"><path d="M695.7 394.1C695.1 390.6 696.3 391.8 700.1 387.8C703.9 383.7 700.1 384.9 707.0 382.1C713.9 379.2 712.2 379.1 720.8 379.1C729.4 379.1 725.3 375.7 732.9 382.1C740.5 388.4 745.3 392.5 743.6 398.3C741.9 404.0 738.8 398.5 727.7 399.3C716.7 400.1 719.1 401.0 710.5 400.7C701.9 400.3 706.8 400.5 701.9 398.3C696.9 396.1 696.2 397.6 695.7 394.1Z"/></clipPath><path d="M695.7 394.1C695.1 390.6 696.3 391.8 700.1 387.8C703.9 383.7 700.1 384.9 707.0 382.1C713.9 379.2 712.2 379.1 720.8 379.1C729.4 379.1 725.3 375.7 732.9 382.1C740.5 388.4 745.3 392.5 743.6 398.3C741.9 404.0 738.8 398.5 727.7 399.3C716.7 400.1 719.1 401.0 710.5 400.7C701.9 400.3 706.8 400.5 701.9 398.3C696.9 396.1 696.2 397.6 695.7 394.1Z" fill="#fefefe" stroke="#dcc4b5" stroke-width=".7"/>
<g clip-path="url(#lec)"><circle cx="713.9" cy="390.3" r="10.4" fill="#7ba3a6"/><circle cx="713.9" cy="390.3" r="8.6" fill="#6b9397" opacity=".5"/><circle cx="713.6" cy="391" r="6.9" fill="#8b8785"/><circle cx="717" cy="386.6" r="3.3" fill="#fff"/></g>
<clipPath id="rec"><path d="M789.8 394.8C789.8 393.6 791.5 393.6 795.0 390.3C798.4 387.1 793.8 389.7 800.1 385.2C806.5 380.7 803.6 380.1 813.9 376.9C824.3 373.7 821.4 373.9 831.2 375.5C840.9 377.1 836.2 375.3 843.2 381.7C850.3 388.2 853.4 389.0 852.2 394.8C851.1 400.6 848.5 397.0 839.8 399.1C831.1 401.3 835.8 401.2 826.0 401.2C816.2 401.2 819.1 401.0 810.5 399.1C801.9 397.2 805.3 397.2 800.1 395.5C795.0 393.9 798.4 394.4 795.0 394.1C791.5 393.9 789.8 396.1 789.8 394.8Z"/></clipPath><path d="M789.8 394.8C789.8 393.6 791.5 393.6 795.0 390.3C798.4 387.1 793.8 389.7 800.1 385.2C806.5 380.7 803.6 380.1 813.9 376.9C824.3 373.7 821.4 373.9 831.2 375.5C840.9 377.1 836.2 375.3 843.2 381.7C850.3 388.2 853.4 389.0 852.2 394.8C851.1 400.6 848.5 397.0 839.8 399.1C831.1 401.3 835.8 401.2 826.0 401.2C816.2 401.2 819.1 401.0 810.5 399.1C801.9 397.2 805.3 397.2 800.1 395.5C795.0 393.9 798.4 394.4 795.0 394.1C791.5 393.9 789.8 396.1 789.8 394.8Z" fill="#fefefe" stroke="#dcc4b5" stroke-width=".7"/>
<g clip-path="url(#rec)"><circle cx="817" cy="388.6" r="10.6" fill="#7ba3a6"/><circle cx="817" cy="388.6" r="8.8" fill="#6b9397" opacity=".5"/><circle cx="816.6" cy="389.4" r="7" fill="#8b8785"/><circle cx="820" cy="383.8" r="3.4" fill="#fff"/></g>
<path d="M684.6 350.7C685.3 361.0 686.1 361.0 686.7 381.7C687.3 402.4 685.9 392.6 686.3 412.8C686.8 432.9 686.1 423.7 688.1 442.1C690.1 460.5 690.9 459.3 692.4 467.9" stroke="#f2d5c1" stroke-width="3.2" fill="none" opacity=".85"/>
<path d="M750.5 373.1C752.2 376.6 754.3 374.8 755.7 383.4C757.0 392.1 757.0 386.9 754.4 399.0C751.9 411.0 752.1 405.9 748.1 419.7C744.0 433.4 744.6 428.9 742.4 440.3C740.2 451.8 740.7 446.1 741.5 454.1C742.4 462.2 743.8 461.0 745.0 464.5" stroke="#f3d8c6" stroke-width="3" fill="none" opacity=".8"/>
<path d="M746.7 370.5C748.7 374.3 751.0 372.2 752.7 381.7C754.4 391.2 754.4 386.3 751.9 399.0C749.3 411.6 749.3 405.9 745.0 419.7C740.7 433.4 741.2 428.9 738.9 440.3C736.6 451.8 736.5 445.4 738.1 454.1C739.6 462.9 741.7 462.4 743.6 466.6" stroke="#cdae9b" stroke-width="1" fill="none"/>
<path d="M779.1 442.9C781.5 442.4 781.6 439.2 786.3 441.2C791.1 443.2 790.1 443.5 793.2 449.0C796.4 454.4 795.3 451.8 795.8 457.6C796.4 463.3 795.3 463.3 795.0 466.2" stroke="#cdae9b" stroke-width="1" fill="none"/>
<path d="M732.9 444.7C731.1 446.7 729.1 445.2 727.4 450.7C725.7 456.1 725.3 455.9 727.7 461.0C730.1 466.2 732.3 464.5 734.6 466.2" stroke="#cdae9b" stroke-width="1" fill="none"/>
<path d="M707.9 420.5C712.2 419.9 712.5 421.4 720.8 418.8C729.2 416.2 726.5 416.8 732.9 412.8C739.3 408.7 737.7 408.7 740.1 406.7" stroke="#cdae9b" stroke-width="1" fill="none"/>
<path d="M797.6 407.2C801.9 410.5 800.4 412.2 810.5 417.1C820.5 421.9 815.1 420.9 827.7 421.7C840.4 422.6 841.5 420.3 848.4 419.7" stroke="#cdae9b" stroke-width="1" fill="none"/>
<path d="M862.2 396.4C864.8 397.2 865.4 395.9 870.0 399.0C874.6 402.0 874.0 403.3 876.0 405.5" stroke="#cdae9b" stroke-width="1" fill="none"/>
<path d="M862.2 392.1C864.5 392.2 864.2 393.0 869.1 392.4C874.0 391.8 874.3 391.0 876.9 390.3" stroke="#cdae9b" stroke-width="1" fill="none"/>
<path d="M795.0 450.7C799.0 453.6 799.0 451.6 807.0 459.3C815.1 467.1 815.1 469.1 819.1 474.0" stroke="#cdae9b" stroke-width="1" fill="none"/>
<path d="M726.0 461.0C723.7 463.3 723.4 462.2 719.1 467.9C714.8 473.7 715.1 474.8 713.1 478.3" stroke="#cdae9b" stroke-width="1" fill="none"/>
<path d="M757.0 371.4C758.2 368.5 759.8 367.9 760.5 362.8C761.2 357.6 759.6 358.2 759.1 355.9" stroke="#cdae9b" stroke-width="1" fill="none"/>
<path d="M777.7 366.2C776.7 363.9 775.3 363.9 774.6 359.3C773.9 354.7 775.3 354.7 775.7 352.4" stroke="#cdae9b" stroke-width="1" fill="none"/>
<ellipse cx="779.5" cy="465" rx="5.6" ry="2" fill="#a39189"/>
<path d="M690.3 487.2C691.6 492.5 690.3 492.1 694.1 503.1C697.9 514.1 695.4 507.5 701.7 520.2C708.0 532.8 704.9 527.1 713.1 541.0C721.3 554.9 717.5 550.5 726.4 561.9C735.2 573.3 730.2 567.6 739.7 575.2C749.1 582.8 743.4 579.3 754.8 584.6C766.2 590.0 761.1 588.8 773.8 591.3C786.4 593.8 780.1 593.2 792.8 592.2C805.4 591.3 799.1 592.9 811.7 588.4C824.4 584.0 818.0 585.9 830.7 579.0C843.3 572.0 837.0 575.2 849.6 567.6C862.3 560.0 856.0 564.4 868.6 556.2C881.3 548.0 874.9 553.0 887.6 542.9C900.2 532.8 895.2 538.5 906.5 525.9C917.9 513.2 915.1 515.7 921.7 505.0C928.3 494.3 924.2 501.2 926.5 493.6C928.7 486.0 927.7 486.0 928.3 482.2L821.2 481.3 L690.3 487.2Z" fill="#d39563"/>
<path d="M928.3 482.2C927.7 486.0 928.7 486.0 926.5 493.6C924.2 501.2 928.3 494.3 921.7 505.0C915.1 515.7 917.9 513.2 906.5 525.9C895.2 538.5 900.2 532.8 887.6 542.9C874.9 553.0 881.3 548.0 868.6 556.2C856.0 564.4 861.0 560.8 849.6 567.6C838.3 574.4 839.5 573.6 834.5 576.7L851.5 558.1 C860.4 551.8 862.9 552.4 878.1 539.1C893.3 525.9 888.2 532.2 897.1 518.3C905.9 504.4 902.7 508.2 904.6 497.4C906.5 486.7 903.4 489.8 902.7 486.0Z" fill="#cb8e5e" opacity=".8"/>
<path d="M821.2 481.3L928.3 481.9L928.0 487.5L868.6 482.6Z" fill="#d79e70" opacity=".7"/>
<path d="M688.1 484.1C689.3 490.5 687.9 490.8 691.9 503.1C695.8 515.4 693.4 508.2 699.8 521.1C706.3 534.1 703.0 528.1 711.2 542.0C719.4 555.9 715.6 551.3 724.5 562.8C733.3 574.4 733.3 572.1 737.8 576.7" stroke="#eab48e" stroke-width="2.2" fill="none"/>
<path d="M739.7 575.2C744.7 578.3 743.4 579.3 754.8 584.6C766.2 590.0 761.1 588.8 773.8 591.3C786.4 593.8 780.1 593.2 792.8 592.2C805.4 591.3 799.1 592.9 811.7 588.4C824.4 584.0 818.0 585.9 830.7 579.0C843.3 572.0 837.0 575.2 849.6 567.6C862.3 560.0 856.0 564.4 868.6 556.2C881.3 548.0 874.9 553.0 887.6 542.9C900.2 532.8 895.2 538.5 906.5 525.9C917.9 513.2 916.7 512.0 921.7 505.0" stroke="#8e5a38" stroke-width=".9" fill="none" opacity=".75"/>
<path d="M835.4 569.5C834.2 572.1 834.5 573.0 831.6 577.4C828.8 581.9 828.5 581.0 826.9 582.8" stroke="#b57b50" stroke-width=".8" fill="none"/>
<path d="M738.2 503.3C739.1 501.3 741.7 501.3 748.7 499.4C755.7 497.4 752.2 497.6 759.2 497.4C766.2 497.2 762.7 498.1 769.7 498.7C776.7 499.4 773.2 497.8 780.2 499.4C787.2 500.9 783.7 500.6 790.7 503.3C797.7 506.0 801.2 506.1 801.2 507.5C801.2 508.9 798.6 507.9 790.7 507.5C782.9 507.1 785.5 506.2 777.6 506.2C769.7 506.2 774.1 507.3 767.1 507.5C760.1 507.7 763.6 507.5 756.6 506.7C749.6 506.0 752.2 506.4 746.1 505.3C740.0 504.1 737.4 505.3 738.2 503.3Z" fill="#b5614c"/>
<path d="M736.3 504.0C736.5 501.4 736.7 504.0 743.5 504.9C750.3 505.8 748.7 505.8 756.6 506.7C764.5 507.6 760.1 507.8 767.1 507.6C774.1 507.5 769.7 506.3 777.6 506.2C785.5 506.1 782.6 506.7 790.7 507.2C798.8 507.8 801.0 506.2 801.9 507.8C802.8 509.3 799.7 509.0 793.4 511.8C787.0 514.7 789.9 513.5 782.9 516.4C775.9 519.4 779.4 518.6 772.4 520.6C765.4 522.6 768.9 522.8 761.9 522.5C754.9 522.2 757.7 523.0 751.4 519.7C745.0 516.4 747.9 517.7 742.8 512.5C737.8 507.2 736.1 506.5 736.3 504.0Z" fill="#d98677"/>
<path d="M745.3 524.3C749.8 525.4 749.1 526.4 758.6 527.4C768.1 528.4 764.9 528.4 773.8 527.4C782.6 526.4 781.4 525.4 785.2 524.3" stroke="#b98055" stroke-width=".8" fill="none"/>
<path d="M751.0 537.6C754.8 537.0 754.8 536.1 762.4 535.7C770.0 535.3 766.8 535.6 773.8 536.5C780.7 537.4 780.1 537.7 783.3 538.4" stroke="#b98055" stroke-width=".8" fill="none"/>
<g fill="none" stroke="#4db7b2" stroke-width=".9"><path d="M676.7 472.2L760.5 472.2L760.5 518.3L677.1 518.3Z"/><path d="M754.3 468.4L870.9 466.7L871.3 517.1L754.8 518.3Z"/><path d="M688.4 483.6L928.3 478.8L930.2 590.7L690.3 594.5Z"/><path d="M732.6 494.6L808.5 494.6L808.5 522.6L733.0 524.3Z"/><path d="M754.8 494.6L761.5 494.6L761.5 518.3L754.8 518.3Z"/><path d="M741.9 521.5L795.2 520.5L795.6 538.4L742.3 539.1Z"/></g>
<path d="M678.5 479.0C679.2 481.4 677.7 481.2 680.5 486.2C683.3 491.3 681.8 490.8 687.1 494.1C692.3 497.4 690.1 497.0 696.2 496.1C702.4 495.2 698.9 496.1 705.4 491.5C712.0 486.9 708.9 487.8 715.9 482.3C722.9 476.8 719.0 478.6 726.4 475.1C733.9 471.6 730.8 473.0 738.2 471.8C745.7 470.6 743.5 471.1 748.7 471.5C754.0 472.0 751.3 471.9 754.0 473.1C756.7 474.3 755.9 474.5 756.9 475.2L757.4 490.4C756.3 491.9 757.8 490.9 754.0 494.8C750.2 498.6 752.2 497.6 746.1 502.0C740.0 506.4 743.5 504.2 735.6 507.9C727.7 511.6 731.2 510.2 722.5 513.1C713.7 516.1 718.1 515.2 709.4 516.7C700.6 518.2 704.1 518.3 696.2 517.7C688.4 517.2 691.2 518.2 685.7 515.1C680.3 512.1 682.7 514.2 679.8 508.6C677.0 502.9 678.3 505.1 677.2 498.1C676.1 491.1 676.1 493.9 676.6 487.6C677.0 481.2 677.9 481.9 678.5 479.0Z" fill="#2e1c11"/>
<path d="M756.0 475.5C757.9 474.0 756.4 473.3 761.9 471.2C767.3 469.0 764.5 469.8 772.4 468.9C780.2 468.0 776.7 467.8 785.5 468.5C794.2 469.3 789.9 468.3 798.6 471.2C807.4 474.0 803.0 472.5 811.7 477.1C820.5 481.7 816.1 480.1 824.9 484.9C833.6 489.7 830.1 488.4 838.0 491.5C845.9 494.6 842.4 493.9 848.5 494.1C854.6 494.3 852.0 495.2 856.4 492.2C860.7 489.1 858.8 490.4 861.6 484.9C864.4 479.5 863.6 480.1 864.9 475.7C866.2 471.4 865.3 473.1 865.5 471.8C866.4 474.4 866.4 472.7 868.2 479.7C869.9 486.7 870.1 484.5 870.8 492.8C871.4 501.1 872.3 498.1 870.1 504.6C867.9 511.2 869.7 508.6 864.2 512.5C858.8 516.4 861.6 514.8 853.7 516.4C845.9 518.1 849.4 517.5 840.6 517.5C831.9 517.5 836.2 517.9 827.5 516.4C818.7 515.0 823.1 516.0 814.4 513.1C805.6 510.3 810.0 511.2 801.2 507.9C792.5 504.6 796.9 506.4 788.1 503.3C779.4 500.2 782.4 501.8 775.0 498.7C767.6 495.7 770.6 496.7 765.8 494.1C761.0 491.5 763.6 492.2 760.6 491.0C757.5 489.7 757.9 490.6 756.6 490.4Z" fill="#2e1c11"/>
<path d="M747.4 482.3C748.3 484.9 750.3 484.9 750.1 490.2C749.8 495.4 747.9 495.4 746.8 498.1" stroke="#4a3020" stroke-width=".7" fill="none"/><path d="M740.9 486.2C741.7 488.9 744.4 488.9 743.5 494.1C742.6 499.4 740.0 499.4 738.2 502.0" stroke="#4a3020" stroke-width=".6" fill="none"/><path d="M763.8 481.0C764.3 483.2 763.2 483.6 765.1 487.6C767.1 491.5 768.2 491.1 769.7 492.8" stroke="#4a3020" stroke-width=".7" fill="none"/><path d="M769.7 481.0C770.4 483.2 769.1 483.4 771.7 487.6C774.3 491.7 775.6 491.5 777.6 493.5" stroke="#4a3020" stroke-width=".6" fill="none"/>
<path d="M951.3 462.6C953.0 463.2 953.2 462.3 956.3 464.5C959.4 466.6 958.2 465.3 960.6 468.9C963.0 472.5 962.1 470.7 963.5 475.3C964.8 479.9 964.5 477.8 964.6 482.8C964.7 487.8 964.9 485.6 963.8 490.3C962.7 495.1 963.5 493.2 961.3 497.0C959.1 500.8 960.2 499.4 957.2 501.9C954.2 504.3 955.7 503.6 952.3 504.3C948.9 505.0 950.4 505.1 947.1 504.0C943.8 502.8 945.1 503.7 942.3 500.9C939.5 498.1 940.5 499.7 938.6 495.5C936.6 491.4 937.3 493.4 936.4 488.6C935.6 483.7 935.7 485.9 936.1 480.9C936.5 476.0 937.2 476.1 937.7 473.6C939.0 475.9 940.3 476.7 941.6 480.4C942.9 484.1 941.3 481.9 941.7 484.7C942.0 487.5 941.7 486.4 942.7 488.8C943.7 491.2 943.2 490.3 944.7 491.9C946.1 493.5 945.4 493.0 947.2 493.7C949.0 494.3 948.2 494.3 950.0 493.9C951.8 493.5 951.0 493.9 952.6 492.4C954.2 491.0 953.6 491.8 954.7 489.6C955.8 487.4 955.5 488.5 956.0 485.7C956.5 483.0 956.4 484.2 956.3 481.4C956.1 478.5 956.3 479.7 955.5 477.2C954.7 474.6 955.2 475.6 953.8 473.7C952.5 471.8 952.3 475.2 951.4 471.5C950.6 467.8 951.3 465.5 951.3 462.6Z" fill="url(#ringg)" stroke="#f0b04c" stroke-width=".6"/>
<path d="M678.5 479.0C679.2 481.4 677.7 481.2 680.5 486.2C683.3 491.3 681.8 490.8 687.1 494.1C692.3 497.4 690.1 497.0 696.2 496.1C702.4 495.2 698.9 496.1 705.4 491.5C712.0 486.9 708.9 487.8 715.9 482.3C722.9 476.8 719.0 478.6 726.4 475.1C733.9 471.6 730.8 473.0 738.2 471.8C745.7 470.6 743.5 471.1 748.7 471.5C754.0 472.0 751.3 471.9 754.0 473.1C756.7 474.3 755.9 474.5 756.9 475.2L757.4 490.4C756.3 491.9 757.8 490.9 754.0 494.8C750.2 498.6 752.2 497.6 746.1 502.0C740.0 506.4 743.5 504.2 735.6 507.9C727.7 511.6 731.2 510.2 722.5 513.1C713.7 516.1 718.1 515.2 709.4 516.7C700.6 518.2 704.1 518.3 696.2 517.7C688.4 517.2 691.2 518.2 685.7 515.1C680.3 512.1 682.7 514.2 679.8 508.6C677.0 502.9 678.3 505.1 677.2 498.1C676.1 491.1 676.1 493.9 676.6 487.6C677.0 481.2 677.9 481.9 678.5 479.0Z" fill="#2e1c11" opacity=".0"/>
<path d="M824.8 527.4H830.8M827.8 524.4V530.4" stroke="#111" stroke-width="1"/><path d="M824.8 527.4H830.8M827.8 524.4V530.4" stroke="#fff" stroke-width=".4"/>
</svg><div class="a" style="left:0;top:0;width:1px;height:611px;background:rgba(255,255,255,.55)"></div><div class="a" style="left:0;top:610px;width:1190px;height:1px;background:rgba(255,255,255,.6)"></div></div>
<!-- library -->
<div class="a" style="left:1410.2px;top:24px;width:189.8px;height:8px;background:#2a2a2a"></div>
<svg style="left:1589.5px;top:26px" width="7" height="5" viewBox="0 0 7 5"><path d="M.5 .5 L2.6 2.5 L.5 4.5 M3.9 .5 L6 2.5 L3.9 4.5" fill="none" stroke="#c8c8c8" stroke-width="1"/></svg>
<div class="a" style="left:1410.2px;top:32px;width:189.8px;height:12px;background:#2d2d2d"></div>
<div class="a" style="left:1448px;top:32px;width:1px;height:11px;background:#282828"></div>
<div class="a p" style="left:1449px;top:32px;width:31px;height:12px"></div>
<div class="a" style="left:1480px;top:32px;width:1px;height:11px;background:#282828"></div>
<div class="a" style="left:1508px;top:32px;width:1px;height:11px;background:#282828"></div>
<span class="t" style="left:1415.0px;top:31.4px;font-size:7.5px;font-weight:400;color:#6e6e6e;transform:scaleX(0.863)">Properties</span>
<span class="t" style="left:1454.5px;top:31.4px;font-size:7.5px;font-weight:700;color:#f0f0f0;transform:scaleX(0.814)">Library</span>
<span class="t" style="left:1485.0px;top:31.4px;font-size:7.5px;font-weight:400;color:#6e6e6e;transform:scaleX(0.782)">Assets</span>
<svg style="left:1591px;top:35px" width="7" height="5" viewBox="0 0 7 5"><rect width="7" height="5" fill="#5c5c5c"/></svg>
<div class="a" style="left:1413px;top:46px;width:150.5px;height:13px;background:#2c2c2c;border:1px solid #414141;border-radius:3px"></div>
<span class="t" style="left:1421.0px;top:46.8px;font-size:10px;font-weight:400;color:#e6e6e6;transform:scaleX(0.820)">background file.fla</span>
<svg style="left:1549.8px;top:50px" width="7" height="5" viewBox="0 0 7 5"><path d="M.6 .8 L3.5 3.8 L6.4 .8" fill="none" stroke="#e4e4e4" stroke-width="1.3"/></svg>
<svg style="left:1569px;top:49.5px" width="11" height="7" viewBox="0 0 11 7"><path d="M0 3.5 H7" stroke="#c8c8c8" stroke-width="1.3"/><circle cx="8" cy="3.5" r="2.6" fill="#c8c8c8"/></svg>
<svg style="left:1586px;top:48.5px" width="10" height="9" viewBox="0 0 10 9"><rect x=".5" y=".5" width="5.6" height="6.4" fill="#8a8a8a" stroke="#c8c8c8" stroke-width="1"/><rect x="3.4" y="2.2" width="5.6" height="6.4" fill="#8a8a8a" stroke="#c8c8c8" stroke-width="1"/></svg>
<div class="a" style="left:1410.2px;top:60px;width:189.8px;height:1px;background:#3c3c3c"></div>
<span class="t" style="left:1412.6px;top:149.6px;font-size:7px;font-weight:400;color:#c4c4c4;transform:scaleX(0.777)">556 items</span>
<div class="a" style="left:1513.5px;top:149.5px;width:85px;height:12px;background:#272727;border:1px solid #3e3e3e;border-radius:3px"></div>
<svg style="left:1516.5px;top:151.5px" width="9" height="8" viewBox="0 0 9 8"><circle cx="5.4" cy="3" r="2.3" fill="none" stroke="#cfcfcf" stroke-width="1"/><path d="M3.8 4.6 L.8 7.4" stroke="#cfcfcf" stroke-width="1.3"/></svg>
<span class="t" style="left:1413.7px;top:166.0px;font-size:7.5px;font-weight:400;color:#cfcfcf;transform:scaleX(0.824)">Name</span>
<svg style="left:1432.5px;top:169px" width="7" height="6" viewBox="0 0 7 6"><path d="M3.5 6 V1 M.8 3.2 L3.5 .6 L6.2 3.2" fill="none" stroke="#d8d8d8" stroke-width="1.2"/></svg>
<div class="a" style="left:1555px;top:164px;width:1px;height:17px;background:#3e3e3e"></div>
<span class="t" style="left:1558.0px;top:166.0px;font-size:7.5px;font-weight:400;color:#cfcfcf;transform:scaleX(0.822)">Linkage</span>
<div class="a" style="left:1410.5px;top:182.5px;width:185px;height:1px;background:#464646"></div>
<div class="a" style="left:1410.5px;top:182.5px;width:1px;height:676px;background:#3e3e3e"></div>
<div class="a" style="left:1593.8px;top:183.5px;width:2.4px;height:261px;background:#5c5c5c;border-radius:1px"></div>
<svg style="left:0;top:0" width="1600" height="870" viewBox="0 0 1600 870"><defs>
<g id="ls"><path d="M0 4.6 L5 .2 V2.6 H8.6 V6.6 H5 V9 Z" fill="none" stroke="#cfcfcf" stroke-width="1"/><circle cx="4.4" cy="6.4" r="1.9" fill="#323232" stroke="#cfcfcf" stroke-width="1"/><rect x="6.6" y="4.4" width="3" height="3.2" fill="#cfcfcf"/></g>
<g id="li"><rect x=".5" y=".8" width="8.4" height="7" fill="none" stroke="#d4d4d4" stroke-width="1"/><path d="M1.2 6.8 L3.4 4 L5 5.8 L6.2 4.8 L8 7 Z" fill="#d4d4d4"/><circle cx="6.4" cy="2.8" r=".8" fill="#d4d4d4"/></g>
<g id="lf"><path d="M0 1.4 H3.4 L4.4 2.6 H9.4 V8.2 H0 Z" fill="#cfcfcf"/></g>
<g id="la"><path d="M.6 .6 L3.4 3.4 L.6 6.2" fill="none" stroke="#e0e0e0" stroke-width="1.2"/></g>
</defs>
<use href="#ls" x="1425" y="187.3"/>
<use href="#ls" x="1425" y="207.9"/>
<use href="#li" x="1425.3" y="229.1"/>
<use href="#ls" x="1425" y="249.2"/>
<use href="#ls" x="1425" y="269.9"/>
<use href="#ls" x="1425" y="290.5"/>
<use href="#ls" x="1425" y="311.1"/>
<use href="#ls" x="1425" y="331.8"/>
<use href="#ls" x="1425" y="352.4"/>
<use href="#ls" x="1425" y="373.1"/>
<use href="#ls" x="1425" y="393.7"/>
<use href="#ls" x="1425" y="414.3"/>
<use href="#li" x="1425.3" y="435.5"/>
<use href="#ls" x="1425" y="455.6"/>
<use href="#ls" x="1425" y="476.3"/>
<use href="#ls" x="1425" y="496.9"/>
<use href="#ls" x="1425" y="517.5"/>
<use href="#lf" x="1425.3" y="538.3"/><use href="#la" x="1414.2" y="539.7"/>
<use href="#ls" x="1425" y="558.8"/>
<use href="#ls" x="1425" y="579.5"/>
<use href="#ls" x="1425" y="600.1"/>
<use href="#ls" x="1425" y="620.7"/>
<use href="#lf" x="1425.3" y="641.5"/><use href="#la" x="1414.2" y="642.9"/>
<use href="#lf" x="1425.3" y="662.1"/><use href="#la" x="1414.2" y="663.5"/>
<use href="#lf" x="1425.3" y="682.8"/><use href="#la" x="1414.2" y="684.2"/>
<use href="#ls" x="1425" y="703.3"/>
<use href="#ls" x="1425" y="723.9"/>
<use href="#ls" x="1425" y="744.6"/>
<use href="#ls" x="1425" y="765.2"/>
<use href="#ls" x="1425" y="785.9"/>
<use href="#ls" x="1425" y="806.5"/>
<use href="#ls" x="1425" y="827.1"/>
<use href="#ls" x="1425" y="847.8"/>
</svg>
<span class="t" style="left:1439.3px;top:186.4px;font-size:9px;font-weight:400;color:#dadada;transform:scaleX(0.895)">2head</span>
<span class="t" style="left:1439.3px;top:207.0px;font-size:9px;font-weight:400;color:#dadada;transform:scaleX(0.895)">back hair</span>
<span class="t" style="left:1439.3px;top:227.7px;font-size:9px;font-weight:400;color:#dadada;transform:scaleX(0.895)">Background Cover.png</span>
<span class="t" style="left:1439.3px;top:248.3px;font-size:9px;font-weight:400;color:#dadada;transform:scaleX(0.895)">bag</span>
<span class="t" style="left:1439.3px;top:269.0px;font-size:9px;font-weight:400;color:#dadada;transform:scaleX(0.895)">bag patti</span>
<span class="t" style="left:1439.3px;top:289.6px;font-size:9px;font-weight:400;color:#dadada;transform:scaleX(0.895)">belt</span>
<span class="t" style="left:1439.3px;top:310.2px;font-size:9px;font-weight:400;color:#dadada;transform:scaleX(0.895)">blouse</span>
<span class="t" style="left:1439.3px;top:330.9px;font-size:9px;font-weight:400;color:#dadada;transform:scaleX(0.895)">blouse part</span>
<span class="t" style="left:1439.3px;top:351.5px;font-size:9px;font-weight:400;color:#dadada;transform:scaleX(0.895)">blouse part inside</span>
<span class="t" style="left:1439.3px;top:372.2px;font-size:9px;font-weight:400;color:#dadada;transform:scaleX(0.895)">body</span>
<span class="t" style="left:1439.3px;top:392.8px;font-size:9px;font-weight:400;color:#dadada;transform:scaleX(0.895)">boy</span>
<span class="t" style="left:1439.3px;top:413.4px;font-size:9px;font-weight:400;color:#dadada;transform:scaleX(0.895)">boy back pose</span>
<span class="t" style="left:1439.3px;top:434.1px;font-size:9px;font-weight:400;color:#dadada;transform:scaleX(0.895)">brown-wood-textured-backgr...</span>
<span class="t" style="left:1439.3px;top:454.7px;font-size:9px;font-weight:400;color:#dadada;transform:scaleX(0.895)">cap</span>
<span class="t" style="left:1439.3px;top:475.4px;font-size:9px;font-weight:400;color:#dadada;transform:scaleX(0.895)">chudail bhoot</span>
<span class="t" style="left:1439.3px;top:496.0px;font-size:9px;font-weight:400;color:#dadada;transform:scaleX(0.895)">down cloth</span>
<span class="t" style="left:1439.3px;top:516.6px;font-size:9px;font-weight:400;color:#dadada;transform:scaleX(0.895)">dupatta latkan</span>
<span class="t" style="left:1439.3px;top:537.3px;font-size:9px;font-weight:400;color:#dadada;transform:scaleX(0.895)">Duplicate Items Folder</span>
<span class="t" style="left:1439.3px;top:557.9px;font-size:9px;font-weight:400;color:#dadada;transform:scaleX(0.895)">ear</span>
<span class="t" style="left:1439.3px;top:578.6px;font-size:9px;font-weight:400;color:#dadada;transform:scaleX(0.895)">eyebrows</span>
<span class="t" style="left:1439.3px;top:599.2px;font-size:9px;font-weight:400;color:#dadada;transform:scaleX(0.895)">face</span>
<span class="t" style="left:1439.3px;top:619.8px;font-size:9px;font-weight:400;color:#dadada;transform:scaleX(0.895)">feather</span>
<span class="t" style="left:1439.3px;top:640.5px;font-size:9px;font-weight:400;color:#dadada;transform:scaleX(0.895)">flash0.ai Assets</span>
<span class="t" style="left:1439.3px;top:661.1px;font-size:9px;font-weight:400;color:#dadada;transform:scaleX(0.895)">flash0.ai Assets_0</span>
<span class="t" style="left:1439.3px;top:681.8px;font-size:9px;font-weight:400;color:#dadada;transform:scaleX(0.895)">flash0.ai Assets_1</span>
<span class="t" style="left:1439.3px;top:702.4px;font-size:9px;font-weight:400;color:#dadada;transform:scaleX(0.895)">front dupatta</span>
<span class="t" style="left:1439.3px;top:723.0px;font-size:9px;font-weight:400;color:#dadada;transform:scaleX(0.895)">green leg dupatta</span>
<span class="t" style="left:1439.3px;top:743.7px;font-size:9px;font-weight:400;color:#dadada;transform:scaleX(0.895)">hair</span>
<span class="t" style="left:1439.3px;top:764.3px;font-size:9px;font-weight:400;color:#dadada;transform:scaleX(0.895)">hair pack</span>
<span class="t" style="left:1439.3px;top:785.0px;font-size:9px;font-weight:400;color:#dadada;transform:scaleX(0.895)">hair1</span>
<span class="t" style="left:1439.3px;top:805.6px;font-size:9px;font-weight:400;color:#dadada;transform:scaleX(0.895)">hair2</span>
<span class="t" style="left:1439.3px;top:826.2px;font-size:9px;font-weight:400;color:#dadada;transform:scaleX(0.895)">hat</span>
<span class="t" style="left:1439.3px;top:846.9px;font-size:9px;font-weight:400;color:#dadada;transform:scaleX(0.895)">hat1</span>
<!-- library bottom -->
<div class="a p" style="left:1410.2px;top:858.5px;width:189.8px;height:11.5px"></div>
<svg style="left:1412.5px;top:861px" width="40" height="8" viewBox="0 0 40 8"><rect x=".5" y=".5" width="6" height="6" fill="none" stroke="#cfcfcf" stroke-width=".9"/><path d="M3.5 1.8V5.2M1.8 3.5H5.2" stroke="#cfcfcf" stroke-width=".9"/><path d="M9.4 1 H12 L12.8 1.8 H16.6 V7 H9.4 Z" fill="#cfcfcf"/><circle cx="23.5" cy="3.8" r="3.4" fill="#cfcfcf"/><path d="M23.5 3.2V6M23.5 1.6V2.4" stroke="#323232" stroke-width="1.1"/><path d="M32 2 H38 M33.8 1 H36.2 M32.8 2.4 L33.2 7.4 H36.8 L37.2 2.4 Z" fill="#bdbdbd" stroke="#bdbdbd" stroke-width=".8"/></svg>
<div class="a" style="left:1454.5px;top:863.5px;width:71px;height:2.5px;background:#5c5c5c;border-radius:1px"></div>

<!-- timeline -->
<div class="a" style="left:209px;top:681px;width:1200px;height:12px;background:#2a2a2a"></div>
<div class="a p" style="left:209.5px;top:682px;width:34.5px;height:11px"></div>
<div class="a" style="left:244px;top:682px;width:1px;height:10px;background:#262626"></div>
<div class="a" style="left:275px;top:682px;width:1px;height:10px;background:#262626"></div>
<span class="t" style="left:213.9px;top:680.9px;font-size:7.5px;font-weight:700;color:#f2f2f2;transform:scaleX(0.845)">Timeline</span>
<span class="t" style="left:248.7px;top:680.9px;font-size:7.5px;font-weight:400;color:#6e6e6e;transform:scaleX(0.946)">Output</span>
<svg style="left:1399px;top:684.5px" width="7" height="5" viewBox="0 0 7 5"><rect width="7" height="5" fill="#5c5c5c"/></svg>
<div class="a" style="left:394px;top:692.5px;width:1px;height:177.5px;background:#2a2a2a"></div>
<div class="a" style="left:209px;top:722.5px;width:1200px;height:1px;background:#2a2a2a"></div>
<div class="a" style="left:395px;top:731.8px;width:1004px;height:1px;background:#2b2b2b"></div>
<div class="a" style="left:209px;top:748.3px;width:1200px;height:1px;background:#2a2a2a"></div>
<div class="a" style="left:209px;top:859.5px;width:1200px;height:1px;background:#2a2a2a"></div>
<!-- ctrl row left -->
<svg style="left:222px;top:703.5px" width="11" height="11" viewBox="0 0 11 11"><path d="M5.5 .6 L10.2 3 L5.5 5.4 L.8 3 Z" fill="#d0d0d0"/><path d="M.8 5.4 L5.5 7.8 L10.2 5.4 M.8 7.8 L5.5 10.2 L10.2 7.8" fill="none" stroke="#d0d0d0" stroke-width="1.1"/></svg>
<svg style="left:332px;top:705px" width="11" height="7" viewBox="0 0 11 7"><rect x="0" y=".4" width="7" height="6.2" rx="1" fill="#4c4c4c"/><path d="M7.4 3.5 L10.6 1 V6 Z" fill="#4c4c4c"/></svg>
<svg style="left:351.5px;top:703.5px" width="12" height="11" viewBox="0 0 12 11"><rect x="3.6" y=".4" width="3.6" height="3.2" fill="#d0d0d0"/><rect x=".2" y="6.4" width="3.6" height="3.2" fill="#d0d0d0"/><rect x="7" y="6.4" width="3.6" height="3.2" fill="#d0d0d0"/><path d="M5.4 3.6 V5 H2 V6.4 M5.4 5 H8.8 V6.4" fill="none" stroke="#d0d0d0" stroke-width=".9"/><circle cx="11.4" cy="10.2" r=".6" fill="#d0d0d0"/></svg>
<svg style="left:371.5px;top:703.5px" width="11" height="10" viewBox="0 0 11 10"><path d="M1 0 V9 H10.4" fill="none" stroke="#d0d0d0" stroke-width="1.1"/><path d="M2.6 7.4 C4.6 7 5.6 5 6.6 3.4 L8.6 2.6" fill="none" stroke="#d0d0d0" stroke-width="1"/><circle cx="7" cy="3.2" r="1.1" fill="#d0d0d0"/></svg>
<span class="t" style="left:411.0px;top:702.8px;font-size:11px;font-weight:400;color:#8c8c8c;transform:scaleX(0.879)">30.00</span>
<span class="t" style="left:436.0px;top:699.8px;font-size:5px;font-weight:400;color:#8c8c8c;transform:scaleX(0.945)">FPS</span>
<span class="t" style="left:461.3px;top:702.8px;font-size:10.5px;font-weight:700;color:#f0f0f0;transform:scaleX(0.633)">1</span>
<span class="t" style="left:469.0px;top:699.8px;font-size:5.5px;font-weight:400;color:#e0e0e0;transform:scaleX(0.889)">F</span>
<!-- ctrl row right -->
<svg style="left:790px;top:704px" width="50" height="10" viewBox="0 0 50 10"><path d="M5.6 1 L2 5 L5.6 9 M44.2 1 L47.8 5 L44.2 9" fill="none" stroke="#d4d4d4" stroke-width="1.3"/>
<rect x="21.4" y="2.4" width="7.2" height="7" fill="none" stroke="#d0d0d0" stroke-width="1.2"/><rect x="23.6" y="4.6" width="2.8" height="2.8" fill="#d0d0d0"/><path d="M27.6 1.8 L29 .2 L30.2 1.8 M29 .4 V3.4" fill="none" stroke="#d0d0d0" stroke-width=".9"/><circle cx="30.6" cy="9.6" r=".6" fill="#d0d0d0"/></svg>
<div class="a" style="left:848px;top:701px;width:1px;height:15px;background:#444"></div>
<svg style="left:855px;top:703.5px" width="80" height="11" viewBox="0 0 80 11"><circle cx="3.8" cy="5.4" r="3.4" fill="#7c7c7c"/><circle cx="7" cy="5.4" r="3.4" fill="#dcdcdc"/><circle cx="11" cy="10" r=".6" fill="#d0d0d0"/>
<path d="M22.5 1.6V9.4M24.6 1.6V9.4M26.8 1.6V9.4M29 1.6V9.4" stroke="#d0d0d0" stroke-width="1.3"/><path d="M30.8 1.6V9.4" stroke="#8a8a8a" stroke-width="1"/><circle cx="32.4" cy="10" r=".6" fill="#d0d0d0"/>
<rect x="42.6" y="4" width="5.6" height="5.4" fill="#d0d0d0"/><rect x="44.4" y="5.6" width="2" height="2" fill="#323232"/><path d="M46.4 4 V1.6 H52.2 V7 H48.4" fill="none" stroke="#d0d0d0" stroke-width="1.2"/><circle cx="53.4" cy="10" r=".6" fill="#d0d0d0"/>
<path d="M64.2 2.2 H73.6 V9.2 H70.8 V6.2 H67 V9.2 H64.2 Z" fill="#d4d4d4"/></svg>
<div class="a" style="left:935px;top:701px;width:1px;height:15px;background:#444"></div>
<svg style="left:941.5px;top:703px" width="80" height="12" viewBox="0 0 80 12"><path d="M1 5.4 V9.4 H10.6 V3.8 H4.6" fill="none" stroke="#d4d4d4" stroke-width="1.3"/><path d="M7 1 L10.6 3.8 L7 6.6 Z" fill="#d4d4d4" transform="translate(-1.6 0)"/>
<path d="M28 2 L22.6 6 L28 10 Z" fill="#d8d8d8"/><path d="M30.2 2 V10" stroke="#d8d8d8" stroke-width="1.4"/>
<path d="M45 1.8 L52 6 L45 10.2 Z" fill="#e0e0e0"/>
<path d="M66 2 V10" stroke="#d8d8d8" stroke-width="1.4"/><path d="M68.4 2 L73.8 6 L68.4 10 Z" fill="#d8d8d8"/></svg>
<svg style="left:1304.5px;top:703.5px" width="12" height="10" viewBox="0 0 12 10"><path d="M1.4 4 C3 1.4 7.4 1 9.4 4.4 M.8 1 L1.2 4.4 L4.6 4" fill="none" stroke="#d4d4d4" stroke-width="1.2"/><path d="M.6 8.6 H11" stroke="#d4d4d4" stroke-width="1.2"/></svg>
<div class="a" style="left:1322px;top:708px;width:17px;height:1.4px;background:#dcdcdc"></div>
<div class="a" style="left:1345px;top:708.2px;width:34px;height:1px;background:#4e4e4e"></div>
<div class="a" style="left:1338.3px;top:705px;width:7.4px;height:7.4px;border:1.3px solid #e0e0e0;border-radius:50%"></div>
<svg style="left:1384.5px;top:704px" width="13" height="8" viewBox="0 0 13 8"><path d="M0 8 L4.4 1.4 L7 5 L8.8 2.6 L12.8 8 Z" fill="#d8d8d8"/></svg>
<!-- layer header -->
<svg style="left:221.5px;top:731px" width="52" height="11" viewBox="0 0 52 11"><rect x=".6" y=".8" width="8.4" height="8.4" fill="none" stroke="#d0d0d0" stroke-width="1"/><path d="M4.8 2.8V7.2M2.6 5H7" stroke="#d0d0d0" stroke-width="1"/>
<path d="M19.6 1.4 H23.4 L24.4 2.6 H30.6 V9.4 H19.6 Z" fill="#d0d0d0"/>
<path d="M40.4 2.2 H49.6 M43.4 .8 H46.6" stroke="#d0d0d0" stroke-width="1.1"/><path d="M41.4 3.4 H48.6 L48 10 H42 Z" fill="#d0d0d0"/><path d="M43.6 4.6V8.8M45 4.6V8.8M46.4 4.6V8.8" stroke="#323232" stroke-width=".6"/></svg>
<svg style="left:330px;top:730.5px" width="56" height="12" viewBox="0 0 56 12"><circle cx="2" cy="5.6" r="1.5" fill="#e0e0e0"/><rect x="14" y="1" width="4.2" height="9" fill="none" stroke="#e6e6e6" stroke-width="1.3"/>
<path d="M27 5.8 C29 2.6 34.4 2.6 36.8 5.8 C34.4 9 29 9 27 5.8Z" fill="none" stroke="#d8d8d8" stroke-width="1"/><circle cx="31.9" cy="5.8" r="1.5" fill="#d8d8d8"/><path d="M27.6 1.6 L36.6 10" stroke="#d8d8d8" stroke-width="1.1"/>
<rect x="44.8" y="5" width="7.4" height="5.8" rx=".8" fill="#e0e0e0"/><path d="M46.4 5 V3.4 C46.4 .8 50.6 .8 50.6 3.4 V5" fill="none" stroke="#e0e0e0" stroke-width="1.2"/><circle cx="48.5" cy="7.8" r=".9" fill="#323232"/></svg>

<div class="a" style="left:209.5px;top:749.2px;width:184.5px;height:15.2px;background:#33609a"></div>
<svg style="left:227.2px;top:752.7px" width="8" height="8" viewBox="0 0 8 8"><path d="M1 .6 H7 V6.8 H3 L1 5 Z" fill="#585858" stroke="#d6d6d6" stroke-width=".9"/><path d="M1 5 H3 V6.8 Z" fill="#d6d6d6"/><path d="M2.6 2.2H5.6" stroke="#bdbdbd" stroke-width=".6"/></svg>
<span class="t" style="left:239.7px;top:750.9px;font-size:7.5px;font-weight:400;color:#ececec;transform:scaleX(0.830)">Layer_4</span>
<div class="a" style="left:344.7px;top:752.9px;width:3.8px;height:8px;background:#f050f0"></div>
<svg style="left:227.2px;top:768.3px" width="8" height="8" viewBox="0 0 8 8"><path d="M1 .6 H7 V6.8 H3 L1 5 Z" fill="#585858" stroke="#d6d6d6" stroke-width=".9"/><path d="M1 5 H3 V6.8 Z" fill="#d6d6d6"/><path d="M2.6 2.2H5.6" stroke="#bdbdbd" stroke-width=".6"/></svg>
<span class="t" style="left:239.7px;top:766.5px;font-size:7.5px;font-weight:400;color:#ececec;transform:scaleX(0.830)">Layer_2</span>
<div class="a" style="left:344.7px;top:768.5px;width:3.8px;height:8px;background:#a63adb"></div>
<div class="a" style="left:209.5px;top:764.2px;width:184.5px;height:1px;background:#2a2a2a"></div>
<svg style="left:227.2px;top:784.1px" width="8" height="8" viewBox="0 0 8 8"><path d="M1 .6 H7 V6.8 H3 L1 5 Z" fill="#585858" stroke="#d6d6d6" stroke-width=".9"/><path d="M1 5 H3 V6.8 Z" fill="#d6d6d6"/><path d="M2.6 2.2H5.6" stroke="#bdbdbd" stroke-width=".6"/></svg>
<span class="t" style="left:239.7px;top:782.3px;font-size:7.5px;font-weight:400;color:#ececec;transform:scaleX(0.830)">Layer_5</span>
<div class="a" style="left:344.7px;top:784.3px;width:3.8px;height:8px;background:#12a59c"></div>
<div class="a" style="left:209.5px;top:780.0px;width:184.5px;height:1px;background:#2a2a2a"></div>
<svg style="left:227.2px;top:799.9px" width="8" height="8" viewBox="0 0 8 8"><path d="M1 .6 H7 V6.8 H3 L1 5 Z" fill="#585858" stroke="#d6d6d6" stroke-width=".9"/><path d="M1 5 H3 V6.8 Z" fill="#d6d6d6"/><path d="M2.6 2.2H5.6" stroke="#bdbdbd" stroke-width=".6"/></svg>
<span class="t" style="left:239.7px;top:798.1px;font-size:7.5px;font-weight:400;color:#ececec;transform:scaleX(0.830)">Layer_3</span>
<div class="a" style="left:344.7px;top:800.1px;width:3.8px;height:8px;background:#f7931e"></div>
<div class="a" style="left:209.5px;top:795.8px;width:184.5px;height:1px;background:#2a2a2a"></div>
<div class="a" style="left:209.5px;top:811.2px;width:1200px;height:1px;background:#2a2a2a"></div>
<svg style="left:0;top:0" width="1600" height="870" viewBox="0 0 1600 870"><rect x="754.7" y="749.2" width="644.1" height="62.4" fill="#2c2c2c"/><rect x="762.2" y="749.2" width="7.5" height="62.4" fill="#404040"/><rect x="799.7" y="749.2" width="7.5" height="62.4" fill="#404040"/><rect x="837.3" y="749.2" width="7.5" height="62.4" fill="#404040"/><rect x="874.8" y="749.2" width="7.5" height="62.4" fill="#404040"/><rect x="912.4" y="749.2" width="7.5" height="62.4" fill="#404040"/><rect x="949.9" y="749.2" width="7.5" height="62.4" fill="#404040"/><rect x="987.5" y="749.2" width="7.5" height="62.4" fill="#404040"/><rect x="1025.0" y="749.2" width="7.5" height="62.4" fill="#404040"/><rect x="1062.6" y="749.2" width="7.5" height="62.4" fill="#404040"/><rect x="1100.1" y="749.2" width="7.5" height="62.4" fill="#404040"/><rect x="1137.7" y="749.2" width="7.5" height="62.4" fill="#404040"/><rect x="1175.2" y="749.2" width="7.5" height="62.4" fill="#404040"/><rect x="1212.8" y="749.2" width="7.5" height="62.4" fill="#404040"/><rect x="1250.3" y="749.2" width="7.5" height="62.4" fill="#404040"/><rect x="1287.9" y="749.2" width="7.5" height="62.4" fill="#404040"/><rect x="1325.4" y="749.2" width="7.5" height="62.4" fill="#404040"/><rect x="1363.0" y="749.2" width="7.5" height="62.4" fill="#404040"/><path d="M762.2 749.2V811.6M769.7 749.2V811.6M777.2 749.2V811.6M784.7 749.2V811.6M792.2 749.2V811.6M799.7 749.2V811.6M807.2 749.2V811.6M814.8 749.2V811.6M822.3 749.2V811.6M829.8 749.2V811.6M837.3 749.2V811.6M844.8 749.2V811.6M852.3 749.2V811.6M859.8 749.2V811.6M867.3 749.2V811.6M874.8 749.2V811.6M882.3 749.2V811.6M889.9 749.2V811.6M897.4 749.2V811.6M904.9 749.2V811.6M912.4 749.2V811.6M919.9 749.2V811.6M927.4 749.2V811.6M934.9 749.2V811.6M942.4 749.2V811.6M949.9 749.2V811.6M957.5 749.2V811.6M965.0 749.2V811.6M972.5 749.2V811.6M980.0 749.2V811.6M987.5 749.2V811.6M995.0 749.2V811.6M1002.5 749.2V811.6M1010.0 749.2V811.6M1017.5 749.2V811.6M1025.0 749.2V811.6M1032.5 749.2V811.6M1040.1 749.2V811.6M1047.6 749.2V811.6M1055.1 749.2V811.6M1062.6 749.2V811.6M1070.1 749.2V811.6M1077.6 749.2V811.6M1085.1 749.2V811.6M1092.6 749.2V811.6M1100.1 749.2V811.6M1107.6 749.2V811.6M1115.2 749.2V811.6M1122.7 749.2V811.6M1130.2 749.2V811.6M1137.7 749.2V811.6M1145.2 749.2V811.6M1152.7 749.2V811.6M1160.2 749.2V811.6M1167.7 749.2V811.6M1175.2 749.2V811.6M1182.8 749.2V811.6M1190.3 749.2V811.6M1197.8 749.2V811.6M1205.3 749.2V811.6M1212.8 749.2V811.6M1220.3 749.2V811.6M1227.8 749.2V811.6M1235.3 749.2V811.6M1242.8 749.2V811.6M1250.3 749.2V811.6M1257.8 749.2V811.6M1265.4 749.2V811.6M1272.9 749.2V811.6M1280.4 749.2V811.6M1287.9 749.2V811.6M1295.4 749.2V811.6M1302.9 749.2V811.6M1310.4 749.2V811.6M1317.9 749.2V811.6M1325.4 749.2V811.6M1333.0 749.2V811.6M1340.5 749.2V811.6M1348.0 749.2V811.6M1355.5 749.2V811.6M1363.0 749.2V811.6M1370.5 749.2V811.6M1378.0 749.2V811.6M1385.5 749.2V811.6M1393.0 749.2V811.6" stroke="#242424" stroke-width=".8"/><rect x="394.2" y="749.2" width="360.5" height="62.4" fill="#989898"/><path d="M401.7 750.0v1.6M409.2 750.0v1.6M416.7 750.0v1.6M424.2 750.0v1.6M431.8 750.0v1.6M439.3 750.0v1.6M446.8 750.0v1.6M454.3 750.0v1.6M461.8 750.0v1.6M469.3 750.0v1.6M476.8 750.0v1.6M484.3 750.0v1.6M491.8 750.0v1.6M499.3 750.0v1.6M506.8 750.0v1.6M514.4 750.0v1.6M521.9 750.0v1.6M529.4 750.0v1.6M536.9 750.0v1.6M544.4 750.0v1.6M551.9 750.0v1.6M559.4 750.0v1.6M566.9 750.0v1.6M574.4 750.0v1.6M582.0 750.0v1.6M589.5 750.0v1.6M597.0 750.0v1.6M604.5 750.0v1.6M612.0 750.0v1.6M619.5 750.0v1.6M627.0 750.0v1.6M634.5 750.0v1.6M642.0 750.0v1.6M649.5 750.0v1.6M657.0 750.0v1.6M664.6 750.0v1.6M672.1 750.0v1.6M679.6 750.0v1.6M687.1 750.0v1.6M694.6 750.0v1.6M702.1 750.0v1.6M709.6 750.0v1.6M717.1 750.0v1.6M724.6 750.0v1.6M732.1 750.0v1.6M739.7 750.0v1.6M747.2 750.0v1.6M401.7 765.6v1.6M409.2 765.6v1.6M416.7 765.6v1.6M424.2 765.6v1.6M431.8 765.6v1.6M439.3 765.6v1.6M446.8 765.6v1.6M454.3 765.6v1.6M461.8 765.6v1.6M469.3 765.6v1.6M476.8 765.6v1.6M484.3 765.6v1.6M491.8 765.6v1.6M499.3 765.6v1.6M506.8 765.6v1.6M514.4 765.6v1.6M521.9 765.6v1.6M529.4 765.6v1.6M536.9 765.6v1.6M544.4 765.6v1.6M551.9 765.6v1.6M559.4 765.6v1.6M566.9 765.6v1.6M574.4 765.6v1.6M582.0 765.6v1.6M589.5 765.6v1.6M597.0 765.6v1.6M604.5 765.6v1.6M612.0 765.6v1.6M619.5 765.6v1.6M627.0 765.6v1.6M634.5 765.6v1.6M642.0 765.6v1.6M649.5 765.6v1.6M657.0 765.6v1.6M664.6 765.6v1.6M672.1 765.6v1.6M679.6 765.6v1.6M687.1 765.6v1.6M694.6 765.6v1.6M702.1 765.6v1.6M709.6 765.6v1.6M717.1 765.6v1.6M724.6 765.6v1.6M732.1 765.6v1.6M739.7 765.6v1.6M747.2 765.6v1.6M401.7 781.4v1.6M409.2 781.4v1.6M416.7 781.4v1.6M424.2 781.4v1.6M431.8 781.4v1.6M439.3 781.4v1.6M446.8 781.4v1.6M454.3 781.4v1.6M461.8 781.4v1.6M469.3 781.4v1.6M476.8 781.4v1.6M484.3 781.4v1.6M491.8 781.4v1.6M499.3 781.4v1.6M506.8 781.4v1.6M514.4 781.4v1.6M521.9 781.4v1.6M529.4 781.4v1.6M536.9 781.4v1.6M544.4 781.4v1.6M551.9 781.4v1.6M559.4 781.4v1.6M566.9 781.4v1.6M574.4 781.4v1.6M582.0 781.4v1.6M589.5 781.4v1.6M597.0 781.4v1.6M604.5 781.4v1.6M612.0 781.4v1.6M619.5 781.4v1.6M627.0 781.4v1.6M634.5 781.4v1.6M642.0 781.4v1.6M649.5 781.4v1.6M657.0 781.4v1.6M664.6 781.4v1.6M672.1 781.4v1.6M679.6 781.4v1.6M687.1 781.4v1.6M694.6 781.4v1.6M702.1 781.4v1.6M709.6 781.4v1.6M717.1 781.4v1.6M724.6 781.4v1.6M732.1 781.4v1.6M739.7 781.4v1.6M747.2 781.4v1.6M401.7 797.2v1.6M409.2 797.2v1.6M416.7 797.2v1.6M424.2 797.2v1.6M431.8 797.2v1.6M439.3 797.2v1.6M446.8 797.2v1.6M454.3 797.2v1.6M461.8 797.2v1.6M469.3 797.2v1.6M476.8 797.2v1.6M484.3 797.2v1.6M491.8 797.2v1.6M499.3 797.2v1.6M506.8 797.2v1.6M514.4 797.2v1.6M521.9 797.2v1.6M529.4 797.2v1.6M536.9 797.2v1.6M544.4 797.2v1.6M551.9 797.2v1.6M559.4 797.2v1.6M566.9 797.2v1.6M574.4 797.2v1.6M582.0 797.2v1.6M589.5 797.2v1.6M597.0 797.2v1.6M604.5 797.2v1.6M612.0 797.2v1.6M619.5 797.2v1.6M627.0 797.2v1.6M634.5 797.2v1.6M642.0 797.2v1.6M649.5 797.2v1.6M657.0 797.2v1.6M664.6 797.2v1.6M672.1 797.2v1.6M679.6 797.2v1.6M687.1 797.2v1.6M694.6 797.2v1.6M702.1 797.2v1.6M709.6 797.2v1.6M717.1 797.2v1.6M724.6 797.2v1.6M732.1 797.2v1.6M739.7 797.2v1.6M747.2 797.2v1.6" stroke="#bcbcbc" stroke-width="1"/><path d="M394.2 764.7H1398.8M394.2 780.5H1398.8M394.2 796.3H1398.8" stroke="#333" stroke-width="1.1"/><path d="M424.2 749.2V811.6M454.3 749.2V811.6M484.3 749.2V811.6M514.4 749.2V811.6M544.4 749.2V811.6M574.4 749.2V811.6M604.5 749.2V811.6M634.5 749.2V811.6M664.6 749.2V811.6M694.6 749.2V811.6M724.6 749.2V811.6M754.7 749.2V811.6" stroke="#333" stroke-width="1.1"/><g fill="#1c1c1c"><circle cx="428.1" cy="759.9" r="1.85"/><circle cx="458.2" cy="759.9" r="1.85"/><circle cx="488.2" cy="759.9" r="1.85"/><circle cx="518.3" cy="759.9" r="1.85"/><circle cx="548.3" cy="759.9" r="1.85"/><circle cx="578.3" cy="759.9" r="1.85"/><circle cx="608.4" cy="759.9" r="1.85"/><circle cx="638.4" cy="759.9" r="1.85"/><circle cx="668.5" cy="759.9" r="1.85"/><circle cx="698.5" cy="759.9" r="1.85"/><circle cx="728.5" cy="759.9" r="1.85"/><circle cx="428.1" cy="775.5" r="1.85"/><circle cx="458.2" cy="775.5" r="1.85"/><circle cx="488.2" cy="775.5" r="1.85"/><circle cx="518.3" cy="775.5" r="1.85"/><circle cx="548.3" cy="775.5" r="1.85"/><circle cx="578.3" cy="775.5" r="1.85"/><circle cx="608.4" cy="775.5" r="1.85"/><circle cx="638.4" cy="775.5" r="1.85"/><circle cx="668.5" cy="775.5" r="1.85"/><circle cx="698.5" cy="775.5" r="1.85"/><circle cx="728.5" cy="775.5" r="1.85"/><circle cx="428.1" cy="791.3" r="1.85"/><circle cx="458.2" cy="791.3" r="1.85"/><circle cx="488.2" cy="791.3" r="1.85"/><circle cx="518.3" cy="791.3" r="1.85"/><circle cx="548.3" cy="791.3" r="1.85"/><circle cx="578.3" cy="791.3" r="1.85"/><circle cx="608.4" cy="791.3" r="1.85"/><circle cx="638.4" cy="791.3" r="1.85"/><circle cx="668.5" cy="791.3" r="1.85"/><circle cx="698.5" cy="791.3" r="1.85"/><circle cx="728.5" cy="791.3" r="1.85"/><circle cx="428.1" cy="807.1" r="1.85"/><circle cx="458.2" cy="807.1" r="1.85"/><circle cx="488.2" cy="807.1" r="1.85"/><circle cx="518.3" cy="807.1" r="1.85"/><circle cx="548.3" cy="807.1" r="1.85"/><circle cx="578.3" cy="807.1" r="1.85"/><circle cx="608.4" cy="807.1" r="1.85"/><circle cx="638.4" cy="807.1" r="1.85"/><circle cx="668.5" cy="807.1" r="1.85"/><circle cx="698.5" cy="807.1" r="1.85"/><circle cx="728.5" cy="807.1" r="1.85"/></g><path d="M421.5 757.0v5.2M451.6 757.0v5.2M481.6 757.0v5.2M511.7 757.0v5.2M541.7 757.0v5.2M571.7 757.0v5.2M601.8 757.0v5.2M631.8 757.0v5.2M661.9 757.0v5.2M691.9 757.0v5.2M721.9 757.0v5.2M752.0 757.0v5.2M421.5 772.6v5.2M451.6 772.6v5.2M481.6 772.6v5.2M511.7 772.6v5.2M541.7 772.6v5.2M571.7 772.6v5.2M601.8 772.6v5.2M631.8 772.6v5.2M661.9 772.6v5.2M691.9 772.6v5.2M721.9 772.6v5.2M752.0 772.6v5.2M421.5 788.4v5.2M451.6 788.4v5.2M481.6 788.4v5.2M511.7 788.4v5.2M541.7 788.4v5.2M571.7 788.4v5.2M601.8 788.4v5.2M631.8 788.4v5.2M661.9 788.4v5.2M691.9 788.4v5.2M721.9 788.4v5.2M752.0 788.4v5.2M421.5 804.2v5.2M451.6 804.2v5.2M481.6 804.2v5.2M511.7 804.2v5.2M541.7 804.2v5.2M571.7 804.2v5.2M601.8 804.2v5.2M631.8 804.2v5.2M661.9 804.2v5.2M691.9 804.2v5.2M721.9 804.2v5.2M752.0 804.2v5.2" stroke="#1c1c1c" stroke-width="1.3"/><path d="M424.2 723.5V731.8M461.8 723.5V731.8M499.3 723.5V731.8M536.9 723.5V731.8M574.4 723.5V731.8M612.0 723.5V731.8M649.5 723.5V731.8M687.1 723.5V731.8M724.6 723.5V731.8M762.2 723.5V731.8M799.7 723.5V731.8M837.3 723.5V731.8M874.8 723.5V731.8M912.4 723.5V731.8M949.9 723.5V731.8M987.5 723.5V731.8M1025.0 723.5V731.8M1062.6 723.5V731.8M1100.1 723.5V731.8M1137.7 723.5V731.8M1175.2 723.5V731.8M1212.8 723.5V731.8M1250.3 723.5V731.8M1287.9 723.5V731.8M1325.4 723.5V731.8M1363.0 723.5V731.8M1400.5 723.5V731.8" stroke="#3e3e3e" stroke-width="1"/><path d="M394.2 732.4v4.4M401.7 732.4v4.4M409.2 732.4v4.4M416.7 732.4v4.4M424.2 732.4v4.4M431.8 732.4v4.4M439.3 732.4v4.4M446.8 732.4v4.4M454.3 732.4v4.4M461.8 732.4v4.4M469.3 732.4v4.4M476.8 732.4v4.4M484.3 732.4v4.4M491.8 732.4v4.4M499.3 732.4v4.4M506.8 732.4v4.4M514.4 732.4v4.4M521.9 732.4v4.4M529.4 732.4v4.4M536.9 732.4v4.4M544.4 732.4v4.4M551.9 732.4v4.4M559.4 732.4v4.4M566.9 732.4v4.4M574.4 732.4v4.4M582.0 732.4v4.4M589.5 732.4v4.4M597.0 732.4v4.4M604.5 732.4v4.4M612.0 732.4v4.4M619.5 732.4v4.4M627.0 732.4v4.4M634.5 732.4v4.4M642.0 732.4v4.4M649.5 732.4v4.4M657.0 732.4v4.4M664.6 732.4v4.4M672.1 732.4v4.4M679.6 732.4v4.4M687.1 732.4v4.4M694.6 732.4v4.4M702.1 732.4v4.4M709.6 732.4v4.4M717.1 732.4v4.4M724.6 732.4v4.4M732.1 732.4v4.4M739.7 732.4v4.4M747.2 732.4v4.4M754.7 732.4v4.4M762.2 732.4v4.4M769.7 732.4v4.4M777.2 732.4v4.4M784.7 732.4v4.4M792.2 732.4v4.4M799.7 732.4v4.4M807.2 732.4v4.4M814.8 732.4v4.4M822.3 732.4v4.4M829.8 732.4v4.4M837.3 732.4v4.4M844.8 732.4v4.4M852.3 732.4v4.4M859.8 732.4v4.4M867.3 732.4v4.4M874.8 732.4v4.4M882.3 732.4v4.4M889.9 732.4v4.4M897.4 732.4v4.4M904.9 732.4v4.4M912.4 732.4v4.4M919.9 732.4v4.4M927.4 732.4v4.4M934.9 732.4v4.4M942.4 732.4v4.4M949.9 732.4v4.4M957.5 732.4v4.4M965.0 732.4v4.4M972.5 732.4v4.4M980.0 732.4v4.4M987.5 732.4v4.4M995.0 732.4v4.4M1002.5 732.4v4.4M1010.0 732.4v4.4M1017.5 732.4v4.4M1025.0 732.4v4.4M1032.5 732.4v4.4M1040.1 732.4v4.4M1047.6 732.4v4.4M1055.1 732.4v4.4M1062.6 732.4v4.4M1070.1 732.4v4.4M1077.6 732.4v4.4M1085.1 732.4v4.4M1092.6 732.4v4.4M1100.1 732.4v4.4M1107.6 732.4v4.4M1115.2 732.4v4.4M1122.7 732.4v4.4M1130.2 732.4v4.4M1137.7 732.4v4.4M1145.2 732.4v4.4M1152.7 732.4v4.4M1160.2 732.4v4.4M1167.7 732.4v4.4M1175.2 732.4v4.4M1182.8 732.4v4.4M1190.3 732.4v4.4M1197.8 732.4v4.4M1205.3 732.4v4.4M1212.8 732.4v4.4M1220.3 732.4v4.4M1227.8 732.4v4.4M1235.3 732.4v4.4M1242.8 732.4v4.4M1250.3 732.4v4.4M1257.8 732.4v4.4M1265.4 732.4v4.4M1272.9 732.4v4.4M1280.4 732.4v4.4M1287.9 732.4v4.4M1295.4 732.4v4.4M1302.9 732.4v4.4M1310.4 732.4v4.4M1317.9 732.4v4.4M1325.4 732.4v4.4M1333.0 732.4v4.4M1340.5 732.4v4.4M1348.0 732.4v4.4M1355.5 732.4v4.4M1363.0 732.4v4.4M1370.5 732.4v4.4M1378.0 732.4v4.4M1385.5 732.4v4.4M1393.0 732.4v4.4M1400.5 732.4v4.4" stroke="#3c3c3c" stroke-width="1"/><rect x="394.6" y="749.2" width="6.9" height="62.4" fill="#6ea6e6" opacity=".72"/><ellipse cx="397.8" cy="759.9" rx="2" ry="1.6" fill="none" stroke="#3f7fd0" stroke-width="1"/><ellipse cx="397.8" cy="775.5" rx="2" ry="1.6" fill="none" stroke="#3f7fd0" stroke-width="1"/><ellipse cx="397.8" cy="791.3" rx="2" ry="1.6" fill="none" stroke="#3f7fd0" stroke-width="1"/><ellipse cx="397.8" cy="807.1" rx="2" ry="1.6" fill="none" stroke="#3f7fd0" stroke-width="1"/><path d="M394.8 724.2 H401.5 V746.4 L400.0 748.2 H396.3 L394.8 746.4 Z" fill="#3b7dd3"/><path d="M398 748V859.5" stroke="#3b7dd3" stroke-width="1.2"/></svg>
<span class="t" style="left:425.6px;top:736.6px;font-size:7px;font-weight:400;color:#8f8f8f;transform:scaleX(0.895)">5</span>
<span class="t" style="left:463.2px;top:736.6px;font-size:7px;font-weight:400;color:#8f8f8f;transform:scaleX(0.895)">10</span>
<span class="t" style="left:500.7px;top:736.6px;font-size:7px;font-weight:400;color:#8f8f8f;transform:scaleX(0.895)">15</span>
<span class="t" style="left:538.3px;top:736.6px;font-size:7px;font-weight:400;color:#8f8f8f;transform:scaleX(0.895)">20</span>
<span class="t" style="left:575.8px;top:736.6px;font-size:7px;font-weight:400;color:#8f8f8f;transform:scaleX(0.895)">25</span>
<span class="t" style="left:613.4px;top:736.6px;font-size:7px;font-weight:400;color:#8f8f8f;transform:scaleX(0.895)">30</span>
<span class="t" style="left:650.9px;top:736.6px;font-size:7px;font-weight:400;color:#8f8f8f;transform:scaleX(0.895)">35</span>
<span class="t" style="left:688.5px;top:736.6px;font-size:7px;font-weight:400;color:#8f8f8f;transform:scaleX(0.895)">40</span>
<span class="t" style="left:726.0px;top:736.6px;font-size:7px;font-weight:400;color:#8f8f8f;transform:scaleX(0.895)">45</span>
<span class="t" style="left:763.6px;top:736.6px;font-size:7px;font-weight:400;color:#8f8f8f;transform:scaleX(0.895)">50</span>
<span class="t" style="left:801.1px;top:736.6px;font-size:7px;font-weight:400;color:#8f8f8f;transform:scaleX(0.895)">55</span>
<span class="t" style="left:838.7px;top:736.6px;font-size:7px;font-weight:400;color:#8f8f8f;transform:scaleX(0.895)">60</span>
<span class="t" style="left:876.2px;top:736.6px;font-size:7px;font-weight:400;color:#8f8f8f;transform:scaleX(0.895)">65</span>
<span class="t" style="left:913.8px;top:736.6px;font-size:7px;font-weight:400;color:#8f8f8f;transform:scaleX(0.895)">70</span>
<span class="t" style="left:951.3px;top:736.6px;font-size:7px;font-weight:400;color:#8f8f8f;transform:scaleX(0.895)">75</span>
<span class="t" style="left:988.9px;top:736.6px;font-size:7px;font-weight:400;color:#8f8f8f;transform:scaleX(0.895)">80</span>
<span class="t" style="left:1026.4px;top:736.6px;font-size:7px;font-weight:400;color:#8f8f8f;transform:scaleX(0.895)">85</span>
<span class="t" style="left:1064.0px;top:736.6px;font-size:7px;font-weight:400;color:#8f8f8f;transform:scaleX(0.895)">90</span>
<span class="t" style="left:1101.5px;top:736.6px;font-size:7px;font-weight:400;color:#8f8f8f;transform:scaleX(0.895)">95</span>
<span class="t" style="left:1139.1px;top:736.6px;font-size:7px;font-weight:400;color:#8f8f8f;transform:scaleX(0.895)">100</span>
<span class="t" style="left:1176.6px;top:736.6px;font-size:7px;font-weight:400;color:#8f8f8f;transform:scaleX(0.895)">105</span>
<span class="t" style="left:1214.2px;top:736.6px;font-size:7px;font-weight:400;color:#8f8f8f;transform:scaleX(0.895)">110</span>
<span class="t" style="left:1251.7px;top:736.6px;font-size:7px;font-weight:400;color:#8f8f8f;transform:scaleX(0.895)">115</span>
<span class="t" style="left:1289.3px;top:736.6px;font-size:7px;font-weight:400;color:#8f8f8f;transform:scaleX(0.895)">120</span>
<span class="t" style="left:1326.8px;top:736.6px;font-size:7px;font-weight:400;color:#8f8f8f;transform:scaleX(0.895)">125</span>
<span class="t" style="left:1364.4px;top:736.6px;font-size:7px;font-weight:400;color:#8f8f8f;transform:scaleX(0.895)">130</span>
<span class="t" style="left:614.5px;top:722.2px;font-size:7px;font-weight:400;color:#8a8a8a;transform:scaleX(0.895)">1s</span>
<span class="t" style="left:838.0px;top:722.2px;font-size:7px;font-weight:400;color:#8a8a8a;transform:scaleX(0.895)">2s</span>
<span class="t" style="left:1063.0px;top:722.2px;font-size:7px;font-weight:400;color:#8a8a8a;transform:scaleX(0.895)">3s</span>
<span class="t" style="left:1288.6px;top:722.2px;font-size:7px;font-weight:400;color:#8a8a8a;transform:scaleX(0.895)">4s</span>
<div class="a" style="left:396px;top:863.5px;width:194px;height:2.5px;background:#5a5a5a;border-radius:1px"></div>
<svg style="left:1413px;top:683.5px" width="5" height="7" viewBox="0 0 5 7"><path d="M.8 .6 L3.8 3.5 L.8 6.4" fill="none" stroke="#e0e0e0" stroke-width="1.2"/></svg>
</body></html>
